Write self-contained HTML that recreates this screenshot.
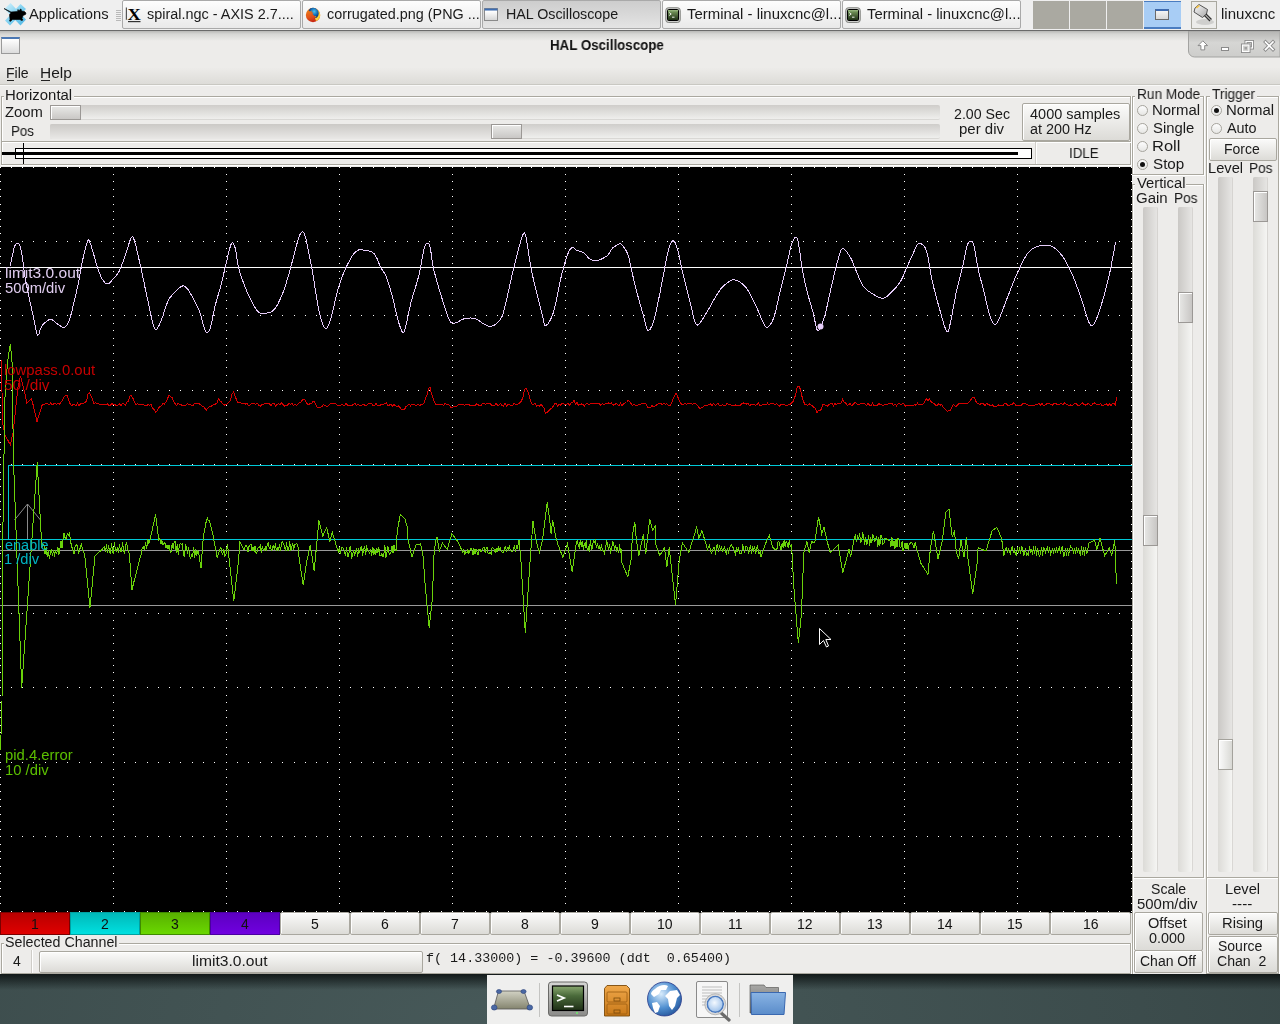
<!DOCTYPE html>
<html><head><meta charset="utf-8"><title>HAL Oscilloscope</title>
<style>
html,body{margin:0;padding:0;width:1280px;height:1024px;overflow:hidden;background:#3b4b4b;font-family:"Liberation Sans",sans-serif}
body>div{position:absolute}
.t{white-space:nowrap;transform-origin:0 0;will-change:transform}
</style></head><body>
<div style="left:0px;top:0px;width:1280px;height:30px;background:#efefef"></div>
<div style="left:0px;top:30px;width:1280px;height:1px;background:#6a6a6a"></div>
<div style="left:116px;top:10px;width:5px;height:1px;background:#b9b9b9"></div>
<div style="left:116px;top:12px;width:5px;height:1px;background:#b9b9b9"></div>
<div style="left:116px;top:14px;width:5px;height:1px;background:#b9b9b9"></div>
<div style="left:116px;top:16px;width:5px;height:1px;background:#b9b9b9"></div>
<div style="left:116px;top:18px;width:5px;height:1px;background:#b9b9b9"></div>
<div style="left:116px;top:20px;width:5px;height:1px;background:#b9b9b9"></div>
<div style="left:122px;top:0px;width:179px;height:29px;background:linear-gradient(#fdfdfd,#e9e9e9);border:1px solid #a9a9a9;box-sizing:border-box;border-radius:2px"></div>
<div style="left:302px;top:0px;width:179px;height:29px;background:linear-gradient(#fdfdfd,#e9e9e9);border:1px solid #a9a9a9;box-sizing:border-box;border-radius:2px"></div>
<div style="left:482px;top:0px;width:179px;height:29px;background:linear-gradient(#cdcdcd,#e4e4e4);border:1px solid #a9a9a9;box-sizing:border-box;border-radius:2px"></div>
<div style="left:662px;top:0px;width:179px;height:29px;background:linear-gradient(#fdfdfd,#e9e9e9);border:1px solid #a9a9a9;box-sizing:border-box;border-radius:2px"></div>
<div style="left:842px;top:0px;width:179px;height:29px;background:linear-gradient(#fdfdfd,#e9e9e9);border:1px solid #a9a9a9;box-sizing:border-box;border-radius:2px"></div>
<div style="left:1033px;top:1px;width:36px;height:28px;background:#aaa9a1"></div>
<div style="left:1070px;top:1px;width:36px;height:28px;background:#aaa9a1"></div>
<div style="left:1107px;top:1px;width:36px;height:28px;background:#aaa9a1"></div>
<div style="left:1144px;top:1px;width:37px;height:28px;background:#a8cdf5;border-top:1px solid #4a7cc0;border-bottom:2px solid #4a7cc0;box-sizing:border-box"></div>
<div style="left:1155px;top:9px;width:14px;height:11px;background:linear-gradient(#f4f4f4,#d8d8d8);border:1px solid #6a6a6a;border-top:2px solid #3d6ab0;box-sizing:border-box"></div>
<div style="left:0px;top:31px;width:1280px;height:943px;background:#edecea"></div>
<div style="left:0px;top:31px;width:1280px;height:10px;background:linear-gradient(#b8b8b6,#d6d6d4 30%,#edecea)"></div>
<div style="left:0px;top:60px;width:1280px;height:24px;background:linear-gradient(#edecea,#edecea 30%,#dddcd8)"></div>
<div style="left:1px;top:37px;width:19px;height:17px;background:linear-gradient(#fff,#dcdcdc);border:1px solid #9a9a9a;border-top:2px solid #4c78b4;box-sizing:border-box"></div>
<div style="left:7px;top:80px;width:7px;height:1px;background:#222"></div>
<div style="left:41px;top:80px;width:9px;height:1px;background:#222"></div>
<div style="left:0px;top:84px;width:1280px;height:1px;background:#c9c8c2"></div>
<div style="left:0px;top:85px;width:1280px;height:1px;background:#f8f8f7"></div>
<div style="left:1px;top:96px;width:1130px;height:69px;border:1px solid #aaa89f;box-sizing:border-box"></div>
<div style="left:2px;top:97px;width:1128px;height:67px;border:1px solid #ffffff;border-right:none;border-bottom:none;box-sizing:border-box"></div>
<div style="left:1131px;top:96px;width:1px;height:70px;background:#fff"></div>
<div style="left:1px;top:165px;width:1131px;height:1px;background:#fff"></div>
<div style="left:4px;top:90px;width:70px;height:12px;background:#edecea"></div>
<div style="left:50px;top:105px;width:890px;height:15px;background:linear-gradient(#cfcdca,#efefed);border-radius:2px;border-bottom:1px solid #d9d8d5;box-sizing:border-box"></div>
<div style="left:50px;top:105px;width:31px;height:15px;background:linear-gradient(#e9e9e7,#c9c7c5);border:1px solid #9b9895;box-shadow:inset 1px 1px 0 #fff;box-sizing:border-box"></div>
<div style="left:50px;top:124px;width:890px;height:15px;background:linear-gradient(#cfcdca,#efefed);border-radius:2px;border-bottom:1px solid #d9d8d5;box-sizing:border-box"></div>
<div style="left:50px;top:124px;width:441px;height:15px;background:linear-gradient(#cbc9c6,#e9e8e6);border-radius:2px 0 0 2px"></div>
<div style="left:491px;top:124px;width:31px;height:15px;background:linear-gradient(#e9e9e7,#c9c7c5);border:1px solid #9b9895;box-shadow:inset 1px 1px 0 #fff;box-sizing:border-box"></div>
<div style="left:1022px;top:103px;width:108px;height:38px;background:linear-gradient(#fbfbfa,#dcdbd7);border:1px solid #a9a79f;border-radius:2px;box-shadow:inset 1px 1px 0 #fff;box-sizing:border-box;"></div>
<div style="left:2px;top:141px;width:1129px;height:1px;background:#aaa89f"></div>
<div style="left:2px;top:142px;width:1129px;height:1px;background:#fff"></div>
<div style="left:1035px;top:142px;width:1px;height:22px;background:#cfcdc8"></div>
<div style="left:1036px;top:142px;width:1px;height:22px;background:#fff"></div>
<div style="left:15px;top:148px;width:1017px;height:11px;border:1px solid #000;box-sizing:border-box;background:#fff"></div>
<div style="left:2px;top:152px;width:1016px;height:3px;background:#000"></div>
<div style="left:23px;top:143px;width:1px;height:21px;background:#000"></div>
<svg width="1132" height="746" viewBox="0 167 1132 746" style="position:absolute;left:0;top:167px"><rect x="0" y="167" width="1132" height="746" fill="#000"/><path d="M0 167h1v1h-1zM11 167h1v1h-1zM22 167h1v1h-1zM33 167h1v1h-1zM45 167h1v1h-1zM56 167h1v1h-1zM67 167h1v1h-1zM79 167h1v1h-1zM90 167h1v1h-1zM101 167h1v1h-1zM113 167h1v1h-1zM124 167h1v1h-1zM135 167h1v1h-1zM147 167h1v1h-1zM158 167h1v1h-1zM169 167h1v1h-1zM180 167h1v1h-1zM192 167h1v1h-1zM203 167h1v1h-1zM214 167h1v1h-1zM226 167h1v1h-1zM237 167h1v1h-1zM248 167h1v1h-1zM260 167h1v1h-1zM271 167h1v1h-1zM282 167h1v1h-1zM294 167h1v1h-1zM305 167h1v1h-1zM316 167h1v1h-1zM327 167h1v1h-1zM339 167h1v1h-1zM350 167h1v1h-1zM361 167h1v1h-1zM373 167h1v1h-1zM384 167h1v1h-1zM395 167h1v1h-1zM407 167h1v1h-1zM418 167h1v1h-1zM429 167h1v1h-1zM441 167h1v1h-1zM452 167h1v1h-1zM463 167h1v1h-1zM475 167h1v1h-1zM486 167h1v1h-1zM497 167h1v1h-1zM508 167h1v1h-1zM520 167h1v1h-1zM531 167h1v1h-1zM542 167h1v1h-1zM554 167h1v1h-1zM565 167h1v1h-1zM576 167h1v1h-1zM588 167h1v1h-1zM599 167h1v1h-1zM610 167h1v1h-1zM622 167h1v1h-1zM633 167h1v1h-1zM644 167h1v1h-1zM655 167h1v1h-1zM667 167h1v1h-1zM678 167h1v1h-1zM689 167h1v1h-1zM701 167h1v1h-1zM712 167h1v1h-1zM723 167h1v1h-1zM735 167h1v1h-1zM746 167h1v1h-1zM757 167h1v1h-1zM769 167h1v1h-1zM780 167h1v1h-1zM791 167h1v1h-1zM803 167h1v1h-1zM814 167h1v1h-1zM825 167h1v1h-1zM836 167h1v1h-1zM848 167h1v1h-1zM859 167h1v1h-1zM870 167h1v1h-1zM882 167h1v1h-1zM893 167h1v1h-1zM904 167h1v1h-1zM916 167h1v1h-1zM927 167h1v1h-1zM938 167h1v1h-1zM950 167h1v1h-1zM961 167h1v1h-1zM972 167h1v1h-1zM983 167h1v1h-1zM995 167h1v1h-1zM1006 167h1v1h-1zM1017 167h1v1h-1zM1029 167h1v1h-1zM1040 167h1v1h-1zM1051 167h1v1h-1zM1063 167h1v1h-1zM1074 167h1v1h-1zM1085 167h1v1h-1zM1097 167h1v1h-1zM1108 167h1v1h-1zM1119 167h1v1h-1zM1131 167h1v1h-1zM0 241h1v1h-1zM11 241h1v1h-1zM22 241h1v1h-1zM33 241h1v1h-1zM45 241h1v1h-1zM56 241h1v1h-1zM67 241h1v1h-1zM79 241h1v1h-1zM90 241h1v1h-1zM101 241h1v1h-1zM113 241h1v1h-1zM124 241h1v1h-1zM135 241h1v1h-1zM147 241h1v1h-1zM158 241h1v1h-1zM169 241h1v1h-1zM180 241h1v1h-1zM192 241h1v1h-1zM203 241h1v1h-1zM214 241h1v1h-1zM226 241h1v1h-1zM237 241h1v1h-1zM248 241h1v1h-1zM260 241h1v1h-1zM271 241h1v1h-1zM282 241h1v1h-1zM294 241h1v1h-1zM305 241h1v1h-1zM316 241h1v1h-1zM327 241h1v1h-1zM339 241h1v1h-1zM350 241h1v1h-1zM361 241h1v1h-1zM373 241h1v1h-1zM384 241h1v1h-1zM395 241h1v1h-1zM407 241h1v1h-1zM418 241h1v1h-1zM429 241h1v1h-1zM441 241h1v1h-1zM452 241h1v1h-1zM463 241h1v1h-1zM475 241h1v1h-1zM486 241h1v1h-1zM497 241h1v1h-1zM508 241h1v1h-1zM520 241h1v1h-1zM531 241h1v1h-1zM542 241h1v1h-1zM554 241h1v1h-1zM565 241h1v1h-1zM576 241h1v1h-1zM588 241h1v1h-1zM599 241h1v1h-1zM610 241h1v1h-1zM622 241h1v1h-1zM633 241h1v1h-1zM644 241h1v1h-1zM655 241h1v1h-1zM667 241h1v1h-1zM678 241h1v1h-1zM689 241h1v1h-1zM701 241h1v1h-1zM712 241h1v1h-1zM723 241h1v1h-1zM735 241h1v1h-1zM746 241h1v1h-1zM757 241h1v1h-1zM769 241h1v1h-1zM780 241h1v1h-1zM791 241h1v1h-1zM803 241h1v1h-1zM814 241h1v1h-1zM825 241h1v1h-1zM836 241h1v1h-1zM848 241h1v1h-1zM859 241h1v1h-1zM870 241h1v1h-1zM882 241h1v1h-1zM893 241h1v1h-1zM904 241h1v1h-1zM916 241h1v1h-1zM927 241h1v1h-1zM938 241h1v1h-1zM950 241h1v1h-1zM961 241h1v1h-1zM972 241h1v1h-1zM983 241h1v1h-1zM995 241h1v1h-1zM1006 241h1v1h-1zM1017 241h1v1h-1zM1029 241h1v1h-1zM1040 241h1v1h-1zM1051 241h1v1h-1zM1063 241h1v1h-1zM1074 241h1v1h-1zM1085 241h1v1h-1zM1097 241h1v1h-1zM1108 241h1v1h-1zM1119 241h1v1h-1zM1131 241h1v1h-1zM0 315h1v1h-1zM11 315h1v1h-1zM22 315h1v1h-1zM33 315h1v1h-1zM45 315h1v1h-1zM56 315h1v1h-1zM67 315h1v1h-1zM79 315h1v1h-1zM90 315h1v1h-1zM101 315h1v1h-1zM113 315h1v1h-1zM124 315h1v1h-1zM135 315h1v1h-1zM147 315h1v1h-1zM158 315h1v1h-1zM169 315h1v1h-1zM180 315h1v1h-1zM192 315h1v1h-1zM203 315h1v1h-1zM214 315h1v1h-1zM226 315h1v1h-1zM237 315h1v1h-1zM248 315h1v1h-1zM260 315h1v1h-1zM271 315h1v1h-1zM282 315h1v1h-1zM294 315h1v1h-1zM305 315h1v1h-1zM316 315h1v1h-1zM327 315h1v1h-1zM339 315h1v1h-1zM350 315h1v1h-1zM361 315h1v1h-1zM373 315h1v1h-1zM384 315h1v1h-1zM395 315h1v1h-1zM407 315h1v1h-1zM418 315h1v1h-1zM429 315h1v1h-1zM441 315h1v1h-1zM452 315h1v1h-1zM463 315h1v1h-1zM475 315h1v1h-1zM486 315h1v1h-1zM497 315h1v1h-1zM508 315h1v1h-1zM520 315h1v1h-1zM531 315h1v1h-1zM542 315h1v1h-1zM554 315h1v1h-1zM565 315h1v1h-1zM576 315h1v1h-1zM588 315h1v1h-1zM599 315h1v1h-1zM610 315h1v1h-1zM622 315h1v1h-1zM633 315h1v1h-1zM644 315h1v1h-1zM655 315h1v1h-1zM667 315h1v1h-1zM678 315h1v1h-1zM689 315h1v1h-1zM701 315h1v1h-1zM712 315h1v1h-1zM723 315h1v1h-1zM735 315h1v1h-1zM746 315h1v1h-1zM757 315h1v1h-1zM769 315h1v1h-1zM780 315h1v1h-1zM791 315h1v1h-1zM803 315h1v1h-1zM814 315h1v1h-1zM825 315h1v1h-1zM836 315h1v1h-1zM848 315h1v1h-1zM859 315h1v1h-1zM870 315h1v1h-1zM882 315h1v1h-1zM893 315h1v1h-1zM904 315h1v1h-1zM916 315h1v1h-1zM927 315h1v1h-1zM938 315h1v1h-1zM950 315h1v1h-1zM961 315h1v1h-1zM972 315h1v1h-1zM983 315h1v1h-1zM995 315h1v1h-1zM1006 315h1v1h-1zM1017 315h1v1h-1zM1029 315h1v1h-1zM1040 315h1v1h-1zM1051 315h1v1h-1zM1063 315h1v1h-1zM1074 315h1v1h-1zM1085 315h1v1h-1zM1097 315h1v1h-1zM1108 315h1v1h-1zM1119 315h1v1h-1zM1131 315h1v1h-1zM0 390h1v1h-1zM11 390h1v1h-1zM22 390h1v1h-1zM33 390h1v1h-1zM45 390h1v1h-1zM56 390h1v1h-1zM67 390h1v1h-1zM79 390h1v1h-1zM90 390h1v1h-1zM101 390h1v1h-1zM113 390h1v1h-1zM124 390h1v1h-1zM135 390h1v1h-1zM147 390h1v1h-1zM158 390h1v1h-1zM169 390h1v1h-1zM180 390h1v1h-1zM192 390h1v1h-1zM203 390h1v1h-1zM214 390h1v1h-1zM226 390h1v1h-1zM237 390h1v1h-1zM248 390h1v1h-1zM260 390h1v1h-1zM271 390h1v1h-1zM282 390h1v1h-1zM294 390h1v1h-1zM305 390h1v1h-1zM316 390h1v1h-1zM327 390h1v1h-1zM339 390h1v1h-1zM350 390h1v1h-1zM361 390h1v1h-1zM373 390h1v1h-1zM384 390h1v1h-1zM395 390h1v1h-1zM407 390h1v1h-1zM418 390h1v1h-1zM429 390h1v1h-1zM441 390h1v1h-1zM452 390h1v1h-1zM463 390h1v1h-1zM475 390h1v1h-1zM486 390h1v1h-1zM497 390h1v1h-1zM508 390h1v1h-1zM520 390h1v1h-1zM531 390h1v1h-1zM542 390h1v1h-1zM554 390h1v1h-1zM565 390h1v1h-1zM576 390h1v1h-1zM588 390h1v1h-1zM599 390h1v1h-1zM610 390h1v1h-1zM622 390h1v1h-1zM633 390h1v1h-1zM644 390h1v1h-1zM655 390h1v1h-1zM667 390h1v1h-1zM678 390h1v1h-1zM689 390h1v1h-1zM701 390h1v1h-1zM712 390h1v1h-1zM723 390h1v1h-1zM735 390h1v1h-1zM746 390h1v1h-1zM757 390h1v1h-1zM769 390h1v1h-1zM780 390h1v1h-1zM791 390h1v1h-1zM803 390h1v1h-1zM814 390h1v1h-1zM825 390h1v1h-1zM836 390h1v1h-1zM848 390h1v1h-1zM859 390h1v1h-1zM870 390h1v1h-1zM882 390h1v1h-1zM893 390h1v1h-1zM904 390h1v1h-1zM916 390h1v1h-1zM927 390h1v1h-1zM938 390h1v1h-1zM950 390h1v1h-1zM961 390h1v1h-1zM972 390h1v1h-1zM983 390h1v1h-1zM995 390h1v1h-1zM1006 390h1v1h-1zM1017 390h1v1h-1zM1029 390h1v1h-1zM1040 390h1v1h-1zM1051 390h1v1h-1zM1063 390h1v1h-1zM1074 390h1v1h-1zM1085 390h1v1h-1zM1097 390h1v1h-1zM1108 390h1v1h-1zM1119 390h1v1h-1zM1131 390h1v1h-1zM0 464h1v1h-1zM11 464h1v1h-1zM22 464h1v1h-1zM33 464h1v1h-1zM45 464h1v1h-1zM56 464h1v1h-1zM67 464h1v1h-1zM79 464h1v1h-1zM90 464h1v1h-1zM101 464h1v1h-1zM113 464h1v1h-1zM124 464h1v1h-1zM135 464h1v1h-1zM147 464h1v1h-1zM158 464h1v1h-1zM169 464h1v1h-1zM180 464h1v1h-1zM192 464h1v1h-1zM203 464h1v1h-1zM214 464h1v1h-1zM226 464h1v1h-1zM237 464h1v1h-1zM248 464h1v1h-1zM260 464h1v1h-1zM271 464h1v1h-1zM282 464h1v1h-1zM294 464h1v1h-1zM305 464h1v1h-1zM316 464h1v1h-1zM327 464h1v1h-1zM339 464h1v1h-1zM350 464h1v1h-1zM361 464h1v1h-1zM373 464h1v1h-1zM384 464h1v1h-1zM395 464h1v1h-1zM407 464h1v1h-1zM418 464h1v1h-1zM429 464h1v1h-1zM441 464h1v1h-1zM452 464h1v1h-1zM463 464h1v1h-1zM475 464h1v1h-1zM486 464h1v1h-1zM497 464h1v1h-1zM508 464h1v1h-1zM520 464h1v1h-1zM531 464h1v1h-1zM542 464h1v1h-1zM554 464h1v1h-1zM565 464h1v1h-1zM576 464h1v1h-1zM588 464h1v1h-1zM599 464h1v1h-1zM610 464h1v1h-1zM622 464h1v1h-1zM633 464h1v1h-1zM644 464h1v1h-1zM655 464h1v1h-1zM667 464h1v1h-1zM678 464h1v1h-1zM689 464h1v1h-1zM701 464h1v1h-1zM712 464h1v1h-1zM723 464h1v1h-1zM735 464h1v1h-1zM746 464h1v1h-1zM757 464h1v1h-1zM769 464h1v1h-1zM780 464h1v1h-1zM791 464h1v1h-1zM803 464h1v1h-1zM814 464h1v1h-1zM825 464h1v1h-1zM836 464h1v1h-1zM848 464h1v1h-1zM859 464h1v1h-1zM870 464h1v1h-1zM882 464h1v1h-1zM893 464h1v1h-1zM904 464h1v1h-1zM916 464h1v1h-1zM927 464h1v1h-1zM938 464h1v1h-1zM950 464h1v1h-1zM961 464h1v1h-1zM972 464h1v1h-1zM983 464h1v1h-1zM995 464h1v1h-1zM1006 464h1v1h-1zM1017 464h1v1h-1zM1029 464h1v1h-1zM1040 464h1v1h-1zM1051 464h1v1h-1zM1063 464h1v1h-1zM1074 464h1v1h-1zM1085 464h1v1h-1zM1097 464h1v1h-1zM1108 464h1v1h-1zM1119 464h1v1h-1zM1131 464h1v1h-1zM0 539h1v1h-1zM11 539h1v1h-1zM22 539h1v1h-1zM33 539h1v1h-1zM45 539h1v1h-1zM56 539h1v1h-1zM67 539h1v1h-1zM79 539h1v1h-1zM90 539h1v1h-1zM101 539h1v1h-1zM113 539h1v1h-1zM124 539h1v1h-1zM135 539h1v1h-1zM147 539h1v1h-1zM158 539h1v1h-1zM169 539h1v1h-1zM180 539h1v1h-1zM192 539h1v1h-1zM203 539h1v1h-1zM214 539h1v1h-1zM226 539h1v1h-1zM237 539h1v1h-1zM248 539h1v1h-1zM260 539h1v1h-1zM271 539h1v1h-1zM282 539h1v1h-1zM294 539h1v1h-1zM305 539h1v1h-1zM316 539h1v1h-1zM327 539h1v1h-1zM339 539h1v1h-1zM350 539h1v1h-1zM361 539h1v1h-1zM373 539h1v1h-1zM384 539h1v1h-1zM395 539h1v1h-1zM407 539h1v1h-1zM418 539h1v1h-1zM429 539h1v1h-1zM441 539h1v1h-1zM452 539h1v1h-1zM463 539h1v1h-1zM475 539h1v1h-1zM486 539h1v1h-1zM497 539h1v1h-1zM508 539h1v1h-1zM520 539h1v1h-1zM531 539h1v1h-1zM542 539h1v1h-1zM554 539h1v1h-1zM565 539h1v1h-1zM576 539h1v1h-1zM588 539h1v1h-1zM599 539h1v1h-1zM610 539h1v1h-1zM622 539h1v1h-1zM633 539h1v1h-1zM644 539h1v1h-1zM655 539h1v1h-1zM667 539h1v1h-1zM678 539h1v1h-1zM689 539h1v1h-1zM701 539h1v1h-1zM712 539h1v1h-1zM723 539h1v1h-1zM735 539h1v1h-1zM746 539h1v1h-1zM757 539h1v1h-1zM769 539h1v1h-1zM780 539h1v1h-1zM791 539h1v1h-1zM803 539h1v1h-1zM814 539h1v1h-1zM825 539h1v1h-1zM836 539h1v1h-1zM848 539h1v1h-1zM859 539h1v1h-1zM870 539h1v1h-1zM882 539h1v1h-1zM893 539h1v1h-1zM904 539h1v1h-1zM916 539h1v1h-1zM927 539h1v1h-1zM938 539h1v1h-1zM950 539h1v1h-1zM961 539h1v1h-1zM972 539h1v1h-1zM983 539h1v1h-1zM995 539h1v1h-1zM1006 539h1v1h-1zM1017 539h1v1h-1zM1029 539h1v1h-1zM1040 539h1v1h-1zM1051 539h1v1h-1zM1063 539h1v1h-1zM1074 539h1v1h-1zM1085 539h1v1h-1zM1097 539h1v1h-1zM1108 539h1v1h-1zM1119 539h1v1h-1zM1131 539h1v1h-1zM0 613h1v1h-1zM11 613h1v1h-1zM22 613h1v1h-1zM33 613h1v1h-1zM45 613h1v1h-1zM56 613h1v1h-1zM67 613h1v1h-1zM79 613h1v1h-1zM90 613h1v1h-1zM101 613h1v1h-1zM113 613h1v1h-1zM124 613h1v1h-1zM135 613h1v1h-1zM147 613h1v1h-1zM158 613h1v1h-1zM169 613h1v1h-1zM180 613h1v1h-1zM192 613h1v1h-1zM203 613h1v1h-1zM214 613h1v1h-1zM226 613h1v1h-1zM237 613h1v1h-1zM248 613h1v1h-1zM260 613h1v1h-1zM271 613h1v1h-1zM282 613h1v1h-1zM294 613h1v1h-1zM305 613h1v1h-1zM316 613h1v1h-1zM327 613h1v1h-1zM339 613h1v1h-1zM350 613h1v1h-1zM361 613h1v1h-1zM373 613h1v1h-1zM384 613h1v1h-1zM395 613h1v1h-1zM407 613h1v1h-1zM418 613h1v1h-1zM429 613h1v1h-1zM441 613h1v1h-1zM452 613h1v1h-1zM463 613h1v1h-1zM475 613h1v1h-1zM486 613h1v1h-1zM497 613h1v1h-1zM508 613h1v1h-1zM520 613h1v1h-1zM531 613h1v1h-1zM542 613h1v1h-1zM554 613h1v1h-1zM565 613h1v1h-1zM576 613h1v1h-1zM588 613h1v1h-1zM599 613h1v1h-1zM610 613h1v1h-1zM622 613h1v1h-1zM633 613h1v1h-1zM644 613h1v1h-1zM655 613h1v1h-1zM667 613h1v1h-1zM678 613h1v1h-1zM689 613h1v1h-1zM701 613h1v1h-1zM712 613h1v1h-1zM723 613h1v1h-1zM735 613h1v1h-1zM746 613h1v1h-1zM757 613h1v1h-1zM769 613h1v1h-1zM780 613h1v1h-1zM791 613h1v1h-1zM803 613h1v1h-1zM814 613h1v1h-1zM825 613h1v1h-1zM836 613h1v1h-1zM848 613h1v1h-1zM859 613h1v1h-1zM870 613h1v1h-1zM882 613h1v1h-1zM893 613h1v1h-1zM904 613h1v1h-1zM916 613h1v1h-1zM927 613h1v1h-1zM938 613h1v1h-1zM950 613h1v1h-1zM961 613h1v1h-1zM972 613h1v1h-1zM983 613h1v1h-1zM995 613h1v1h-1zM1006 613h1v1h-1zM1017 613h1v1h-1zM1029 613h1v1h-1zM1040 613h1v1h-1zM1051 613h1v1h-1zM1063 613h1v1h-1zM1074 613h1v1h-1zM1085 613h1v1h-1zM1097 613h1v1h-1zM1108 613h1v1h-1zM1119 613h1v1h-1zM1131 613h1v1h-1zM0 687h1v1h-1zM11 687h1v1h-1zM22 687h1v1h-1zM33 687h1v1h-1zM45 687h1v1h-1zM56 687h1v1h-1zM67 687h1v1h-1zM79 687h1v1h-1zM90 687h1v1h-1zM101 687h1v1h-1zM113 687h1v1h-1zM124 687h1v1h-1zM135 687h1v1h-1zM147 687h1v1h-1zM158 687h1v1h-1zM169 687h1v1h-1zM180 687h1v1h-1zM192 687h1v1h-1zM203 687h1v1h-1zM214 687h1v1h-1zM226 687h1v1h-1zM237 687h1v1h-1zM248 687h1v1h-1zM260 687h1v1h-1zM271 687h1v1h-1zM282 687h1v1h-1zM294 687h1v1h-1zM305 687h1v1h-1zM316 687h1v1h-1zM327 687h1v1h-1zM339 687h1v1h-1zM350 687h1v1h-1zM361 687h1v1h-1zM373 687h1v1h-1zM384 687h1v1h-1zM395 687h1v1h-1zM407 687h1v1h-1zM418 687h1v1h-1zM429 687h1v1h-1zM441 687h1v1h-1zM452 687h1v1h-1zM463 687h1v1h-1zM475 687h1v1h-1zM486 687h1v1h-1zM497 687h1v1h-1zM508 687h1v1h-1zM520 687h1v1h-1zM531 687h1v1h-1zM542 687h1v1h-1zM554 687h1v1h-1zM565 687h1v1h-1zM576 687h1v1h-1zM588 687h1v1h-1zM599 687h1v1h-1zM610 687h1v1h-1zM622 687h1v1h-1zM633 687h1v1h-1zM644 687h1v1h-1zM655 687h1v1h-1zM667 687h1v1h-1zM678 687h1v1h-1zM689 687h1v1h-1zM701 687h1v1h-1zM712 687h1v1h-1zM723 687h1v1h-1zM735 687h1v1h-1zM746 687h1v1h-1zM757 687h1v1h-1zM769 687h1v1h-1zM780 687h1v1h-1zM791 687h1v1h-1zM803 687h1v1h-1zM814 687h1v1h-1zM825 687h1v1h-1zM836 687h1v1h-1zM848 687h1v1h-1zM859 687h1v1h-1zM870 687h1v1h-1zM882 687h1v1h-1zM893 687h1v1h-1zM904 687h1v1h-1zM916 687h1v1h-1zM927 687h1v1h-1zM938 687h1v1h-1zM950 687h1v1h-1zM961 687h1v1h-1zM972 687h1v1h-1zM983 687h1v1h-1zM995 687h1v1h-1zM1006 687h1v1h-1zM1017 687h1v1h-1zM1029 687h1v1h-1zM1040 687h1v1h-1zM1051 687h1v1h-1zM1063 687h1v1h-1zM1074 687h1v1h-1zM1085 687h1v1h-1zM1097 687h1v1h-1zM1108 687h1v1h-1zM1119 687h1v1h-1zM1131 687h1v1h-1zM0 762h1v1h-1zM11 762h1v1h-1zM22 762h1v1h-1zM33 762h1v1h-1zM45 762h1v1h-1zM56 762h1v1h-1zM67 762h1v1h-1zM79 762h1v1h-1zM90 762h1v1h-1zM101 762h1v1h-1zM113 762h1v1h-1zM124 762h1v1h-1zM135 762h1v1h-1zM147 762h1v1h-1zM158 762h1v1h-1zM169 762h1v1h-1zM180 762h1v1h-1zM192 762h1v1h-1zM203 762h1v1h-1zM214 762h1v1h-1zM226 762h1v1h-1zM237 762h1v1h-1zM248 762h1v1h-1zM260 762h1v1h-1zM271 762h1v1h-1zM282 762h1v1h-1zM294 762h1v1h-1zM305 762h1v1h-1zM316 762h1v1h-1zM327 762h1v1h-1zM339 762h1v1h-1zM350 762h1v1h-1zM361 762h1v1h-1zM373 762h1v1h-1zM384 762h1v1h-1zM395 762h1v1h-1zM407 762h1v1h-1zM418 762h1v1h-1zM429 762h1v1h-1zM441 762h1v1h-1zM452 762h1v1h-1zM463 762h1v1h-1zM475 762h1v1h-1zM486 762h1v1h-1zM497 762h1v1h-1zM508 762h1v1h-1zM520 762h1v1h-1zM531 762h1v1h-1zM542 762h1v1h-1zM554 762h1v1h-1zM565 762h1v1h-1zM576 762h1v1h-1zM588 762h1v1h-1zM599 762h1v1h-1zM610 762h1v1h-1zM622 762h1v1h-1zM633 762h1v1h-1zM644 762h1v1h-1zM655 762h1v1h-1zM667 762h1v1h-1zM678 762h1v1h-1zM689 762h1v1h-1zM701 762h1v1h-1zM712 762h1v1h-1zM723 762h1v1h-1zM735 762h1v1h-1zM746 762h1v1h-1zM757 762h1v1h-1zM769 762h1v1h-1zM780 762h1v1h-1zM791 762h1v1h-1zM803 762h1v1h-1zM814 762h1v1h-1zM825 762h1v1h-1zM836 762h1v1h-1zM848 762h1v1h-1zM859 762h1v1h-1zM870 762h1v1h-1zM882 762h1v1h-1zM893 762h1v1h-1zM904 762h1v1h-1zM916 762h1v1h-1zM927 762h1v1h-1zM938 762h1v1h-1zM950 762h1v1h-1zM961 762h1v1h-1zM972 762h1v1h-1zM983 762h1v1h-1zM995 762h1v1h-1zM1006 762h1v1h-1zM1017 762h1v1h-1zM1029 762h1v1h-1zM1040 762h1v1h-1zM1051 762h1v1h-1zM1063 762h1v1h-1zM1074 762h1v1h-1zM1085 762h1v1h-1zM1097 762h1v1h-1zM1108 762h1v1h-1zM1119 762h1v1h-1zM1131 762h1v1h-1zM0 836h1v1h-1zM11 836h1v1h-1zM22 836h1v1h-1zM33 836h1v1h-1zM45 836h1v1h-1zM56 836h1v1h-1zM67 836h1v1h-1zM79 836h1v1h-1zM90 836h1v1h-1zM101 836h1v1h-1zM113 836h1v1h-1zM124 836h1v1h-1zM135 836h1v1h-1zM147 836h1v1h-1zM158 836h1v1h-1zM169 836h1v1h-1zM180 836h1v1h-1zM192 836h1v1h-1zM203 836h1v1h-1zM214 836h1v1h-1zM226 836h1v1h-1zM237 836h1v1h-1zM248 836h1v1h-1zM260 836h1v1h-1zM271 836h1v1h-1zM282 836h1v1h-1zM294 836h1v1h-1zM305 836h1v1h-1zM316 836h1v1h-1zM327 836h1v1h-1zM339 836h1v1h-1zM350 836h1v1h-1zM361 836h1v1h-1zM373 836h1v1h-1zM384 836h1v1h-1zM395 836h1v1h-1zM407 836h1v1h-1zM418 836h1v1h-1zM429 836h1v1h-1zM441 836h1v1h-1zM452 836h1v1h-1zM463 836h1v1h-1zM475 836h1v1h-1zM486 836h1v1h-1zM497 836h1v1h-1zM508 836h1v1h-1zM520 836h1v1h-1zM531 836h1v1h-1zM542 836h1v1h-1zM554 836h1v1h-1zM565 836h1v1h-1zM576 836h1v1h-1zM588 836h1v1h-1zM599 836h1v1h-1zM610 836h1v1h-1zM622 836h1v1h-1zM633 836h1v1h-1zM644 836h1v1h-1zM655 836h1v1h-1zM667 836h1v1h-1zM678 836h1v1h-1zM689 836h1v1h-1zM701 836h1v1h-1zM712 836h1v1h-1zM723 836h1v1h-1zM735 836h1v1h-1zM746 836h1v1h-1zM757 836h1v1h-1zM769 836h1v1h-1zM780 836h1v1h-1zM791 836h1v1h-1zM803 836h1v1h-1zM814 836h1v1h-1zM825 836h1v1h-1zM836 836h1v1h-1zM848 836h1v1h-1zM859 836h1v1h-1zM870 836h1v1h-1zM882 836h1v1h-1zM893 836h1v1h-1zM904 836h1v1h-1zM916 836h1v1h-1zM927 836h1v1h-1zM938 836h1v1h-1zM950 836h1v1h-1zM961 836h1v1h-1zM972 836h1v1h-1zM983 836h1v1h-1zM995 836h1v1h-1zM1006 836h1v1h-1zM1017 836h1v1h-1zM1029 836h1v1h-1zM1040 836h1v1h-1zM1051 836h1v1h-1zM1063 836h1v1h-1zM1074 836h1v1h-1zM1085 836h1v1h-1zM1097 836h1v1h-1zM1108 836h1v1h-1zM1119 836h1v1h-1zM1131 836h1v1h-1zM0 911h1v1h-1zM11 911h1v1h-1zM22 911h1v1h-1zM33 911h1v1h-1zM45 911h1v1h-1zM56 911h1v1h-1zM67 911h1v1h-1zM79 911h1v1h-1zM90 911h1v1h-1zM101 911h1v1h-1zM113 911h1v1h-1zM124 911h1v1h-1zM135 911h1v1h-1zM147 911h1v1h-1zM158 911h1v1h-1zM169 911h1v1h-1zM180 911h1v1h-1zM192 911h1v1h-1zM203 911h1v1h-1zM214 911h1v1h-1zM226 911h1v1h-1zM237 911h1v1h-1zM248 911h1v1h-1zM260 911h1v1h-1zM271 911h1v1h-1zM282 911h1v1h-1zM294 911h1v1h-1zM305 911h1v1h-1zM316 911h1v1h-1zM327 911h1v1h-1zM339 911h1v1h-1zM350 911h1v1h-1zM361 911h1v1h-1zM373 911h1v1h-1zM384 911h1v1h-1zM395 911h1v1h-1zM407 911h1v1h-1zM418 911h1v1h-1zM429 911h1v1h-1zM441 911h1v1h-1zM452 911h1v1h-1zM463 911h1v1h-1zM475 911h1v1h-1zM486 911h1v1h-1zM497 911h1v1h-1zM508 911h1v1h-1zM520 911h1v1h-1zM531 911h1v1h-1zM542 911h1v1h-1zM554 911h1v1h-1zM565 911h1v1h-1zM576 911h1v1h-1zM588 911h1v1h-1zM599 911h1v1h-1zM610 911h1v1h-1zM622 911h1v1h-1zM633 911h1v1h-1zM644 911h1v1h-1zM655 911h1v1h-1zM667 911h1v1h-1zM678 911h1v1h-1zM689 911h1v1h-1zM701 911h1v1h-1zM712 911h1v1h-1zM723 911h1v1h-1zM735 911h1v1h-1zM746 911h1v1h-1zM757 911h1v1h-1zM769 911h1v1h-1zM780 911h1v1h-1zM791 911h1v1h-1zM803 911h1v1h-1zM814 911h1v1h-1zM825 911h1v1h-1zM836 911h1v1h-1zM848 911h1v1h-1zM859 911h1v1h-1zM870 911h1v1h-1zM882 911h1v1h-1zM893 911h1v1h-1zM904 911h1v1h-1zM916 911h1v1h-1zM927 911h1v1h-1zM938 911h1v1h-1zM950 911h1v1h-1zM961 911h1v1h-1zM972 911h1v1h-1zM983 911h1v1h-1zM995 911h1v1h-1zM1006 911h1v1h-1zM1017 911h1v1h-1zM1029 911h1v1h-1zM1040 911h1v1h-1zM1051 911h1v1h-1zM1063 911h1v1h-1zM1074 911h1v1h-1zM1085 911h1v1h-1zM1097 911h1v1h-1zM1108 911h1v1h-1zM1119 911h1v1h-1zM1131 911h1v1h-1zM0 174h1v1h-1zM0 181h1v1h-1zM0 189h1v1h-1zM0 196h1v1h-1zM0 204h1v1h-1zM0 211h1v1h-1zM0 219h1v1h-1zM0 226h1v1h-1zM0 233h1v1h-1zM0 248h1v1h-1zM0 256h1v1h-1zM0 263h1v1h-1zM0 271h1v1h-1zM0 278h1v1h-1zM0 286h1v1h-1zM0 293h1v1h-1zM0 300h1v1h-1zM0 308h1v1h-1zM0 323h1v1h-1zM0 330h1v1h-1zM0 338h1v1h-1zM0 345h1v1h-1zM0 353h1v1h-1zM0 360h1v1h-1zM0 367h1v1h-1zM0 375h1v1h-1zM0 382h1v1h-1zM0 397h1v1h-1zM0 405h1v1h-1zM0 412h1v1h-1zM0 419h1v1h-1zM0 427h1v1h-1zM0 434h1v1h-1zM0 442h1v1h-1zM0 449h1v1h-1zM0 457h1v1h-1zM0 472h1v1h-1zM0 479h1v1h-1zM0 486h1v1h-1zM0 494h1v1h-1zM0 501h1v1h-1zM0 509h1v1h-1zM0 516h1v1h-1zM0 524h1v1h-1zM0 531h1v1h-1zM0 546h1v1h-1zM0 553h1v1h-1zM0 561h1v1h-1zM0 568h1v1h-1zM0 576h1v1h-1zM0 583h1v1h-1zM0 591h1v1h-1zM0 598h1v1h-1zM0 605h1v1h-1zM0 620h1v1h-1zM0 628h1v1h-1zM0 635h1v1h-1zM0 643h1v1h-1zM0 650h1v1h-1zM0 658h1v1h-1zM0 665h1v1h-1zM0 672h1v1h-1zM0 680h1v1h-1zM0 695h1v1h-1zM0 702h1v1h-1zM0 710h1v1h-1zM0 717h1v1h-1zM0 725h1v1h-1zM0 732h1v1h-1zM0 739h1v1h-1zM0 747h1v1h-1zM0 754h1v1h-1zM0 769h1v1h-1zM0 777h1v1h-1zM0 784h1v1h-1zM0 791h1v1h-1zM0 799h1v1h-1zM0 806h1v1h-1zM0 814h1v1h-1zM0 821h1v1h-1zM0 829h1v1h-1zM0 844h1v1h-1zM0 851h1v1h-1zM0 858h1v1h-1zM0 866h1v1h-1zM0 873h1v1h-1zM0 881h1v1h-1zM0 888h1v1h-1zM0 896h1v1h-1zM0 903h1v1h-1zM113 174h1v1h-1zM113 181h1v1h-1zM113 189h1v1h-1zM113 196h1v1h-1zM113 204h1v1h-1zM113 211h1v1h-1zM113 219h1v1h-1zM113 226h1v1h-1zM113 233h1v1h-1zM113 248h1v1h-1zM113 256h1v1h-1zM113 263h1v1h-1zM113 271h1v1h-1zM113 278h1v1h-1zM113 286h1v1h-1zM113 293h1v1h-1zM113 300h1v1h-1zM113 308h1v1h-1zM113 323h1v1h-1zM113 330h1v1h-1zM113 338h1v1h-1zM113 345h1v1h-1zM113 353h1v1h-1zM113 360h1v1h-1zM113 367h1v1h-1zM113 375h1v1h-1zM113 382h1v1h-1zM113 397h1v1h-1zM113 405h1v1h-1zM113 412h1v1h-1zM113 419h1v1h-1zM113 427h1v1h-1zM113 434h1v1h-1zM113 442h1v1h-1zM113 449h1v1h-1zM113 457h1v1h-1zM113 472h1v1h-1zM113 479h1v1h-1zM113 486h1v1h-1zM113 494h1v1h-1zM113 501h1v1h-1zM113 509h1v1h-1zM113 516h1v1h-1zM113 524h1v1h-1zM113 531h1v1h-1zM113 546h1v1h-1zM113 553h1v1h-1zM113 561h1v1h-1zM113 568h1v1h-1zM113 576h1v1h-1zM113 583h1v1h-1zM113 591h1v1h-1zM113 598h1v1h-1zM113 605h1v1h-1zM113 620h1v1h-1zM113 628h1v1h-1zM113 635h1v1h-1zM113 643h1v1h-1zM113 650h1v1h-1zM113 658h1v1h-1zM113 665h1v1h-1zM113 672h1v1h-1zM113 680h1v1h-1zM113 695h1v1h-1zM113 702h1v1h-1zM113 710h1v1h-1zM113 717h1v1h-1zM113 725h1v1h-1zM113 732h1v1h-1zM113 739h1v1h-1zM113 747h1v1h-1zM113 754h1v1h-1zM113 769h1v1h-1zM113 777h1v1h-1zM113 784h1v1h-1zM113 791h1v1h-1zM113 799h1v1h-1zM113 806h1v1h-1zM113 814h1v1h-1zM113 821h1v1h-1zM113 829h1v1h-1zM113 844h1v1h-1zM113 851h1v1h-1zM113 858h1v1h-1zM113 866h1v1h-1zM113 873h1v1h-1zM113 881h1v1h-1zM113 888h1v1h-1zM113 896h1v1h-1zM113 903h1v1h-1zM226 174h1v1h-1zM226 181h1v1h-1zM226 189h1v1h-1zM226 196h1v1h-1zM226 204h1v1h-1zM226 211h1v1h-1zM226 219h1v1h-1zM226 226h1v1h-1zM226 233h1v1h-1zM226 248h1v1h-1zM226 256h1v1h-1zM226 263h1v1h-1zM226 271h1v1h-1zM226 278h1v1h-1zM226 286h1v1h-1zM226 293h1v1h-1zM226 300h1v1h-1zM226 308h1v1h-1zM226 323h1v1h-1zM226 330h1v1h-1zM226 338h1v1h-1zM226 345h1v1h-1zM226 353h1v1h-1zM226 360h1v1h-1zM226 367h1v1h-1zM226 375h1v1h-1zM226 382h1v1h-1zM226 397h1v1h-1zM226 405h1v1h-1zM226 412h1v1h-1zM226 419h1v1h-1zM226 427h1v1h-1zM226 434h1v1h-1zM226 442h1v1h-1zM226 449h1v1h-1zM226 457h1v1h-1zM226 472h1v1h-1zM226 479h1v1h-1zM226 486h1v1h-1zM226 494h1v1h-1zM226 501h1v1h-1zM226 509h1v1h-1zM226 516h1v1h-1zM226 524h1v1h-1zM226 531h1v1h-1zM226 546h1v1h-1zM226 553h1v1h-1zM226 561h1v1h-1zM226 568h1v1h-1zM226 576h1v1h-1zM226 583h1v1h-1zM226 591h1v1h-1zM226 598h1v1h-1zM226 605h1v1h-1zM226 620h1v1h-1zM226 628h1v1h-1zM226 635h1v1h-1zM226 643h1v1h-1zM226 650h1v1h-1zM226 658h1v1h-1zM226 665h1v1h-1zM226 672h1v1h-1zM226 680h1v1h-1zM226 695h1v1h-1zM226 702h1v1h-1zM226 710h1v1h-1zM226 717h1v1h-1zM226 725h1v1h-1zM226 732h1v1h-1zM226 739h1v1h-1zM226 747h1v1h-1zM226 754h1v1h-1zM226 769h1v1h-1zM226 777h1v1h-1zM226 784h1v1h-1zM226 791h1v1h-1zM226 799h1v1h-1zM226 806h1v1h-1zM226 814h1v1h-1zM226 821h1v1h-1zM226 829h1v1h-1zM226 844h1v1h-1zM226 851h1v1h-1zM226 858h1v1h-1zM226 866h1v1h-1zM226 873h1v1h-1zM226 881h1v1h-1zM226 888h1v1h-1zM226 896h1v1h-1zM226 903h1v1h-1zM339 174h1v1h-1zM339 181h1v1h-1zM339 189h1v1h-1zM339 196h1v1h-1zM339 204h1v1h-1zM339 211h1v1h-1zM339 219h1v1h-1zM339 226h1v1h-1zM339 233h1v1h-1zM339 248h1v1h-1zM339 256h1v1h-1zM339 263h1v1h-1zM339 271h1v1h-1zM339 278h1v1h-1zM339 286h1v1h-1zM339 293h1v1h-1zM339 300h1v1h-1zM339 308h1v1h-1zM339 323h1v1h-1zM339 330h1v1h-1zM339 338h1v1h-1zM339 345h1v1h-1zM339 353h1v1h-1zM339 360h1v1h-1zM339 367h1v1h-1zM339 375h1v1h-1zM339 382h1v1h-1zM339 397h1v1h-1zM339 405h1v1h-1zM339 412h1v1h-1zM339 419h1v1h-1zM339 427h1v1h-1zM339 434h1v1h-1zM339 442h1v1h-1zM339 449h1v1h-1zM339 457h1v1h-1zM339 472h1v1h-1zM339 479h1v1h-1zM339 486h1v1h-1zM339 494h1v1h-1zM339 501h1v1h-1zM339 509h1v1h-1zM339 516h1v1h-1zM339 524h1v1h-1zM339 531h1v1h-1zM339 546h1v1h-1zM339 553h1v1h-1zM339 561h1v1h-1zM339 568h1v1h-1zM339 576h1v1h-1zM339 583h1v1h-1zM339 591h1v1h-1zM339 598h1v1h-1zM339 605h1v1h-1zM339 620h1v1h-1zM339 628h1v1h-1zM339 635h1v1h-1zM339 643h1v1h-1zM339 650h1v1h-1zM339 658h1v1h-1zM339 665h1v1h-1zM339 672h1v1h-1zM339 680h1v1h-1zM339 695h1v1h-1zM339 702h1v1h-1zM339 710h1v1h-1zM339 717h1v1h-1zM339 725h1v1h-1zM339 732h1v1h-1zM339 739h1v1h-1zM339 747h1v1h-1zM339 754h1v1h-1zM339 769h1v1h-1zM339 777h1v1h-1zM339 784h1v1h-1zM339 791h1v1h-1zM339 799h1v1h-1zM339 806h1v1h-1zM339 814h1v1h-1zM339 821h1v1h-1zM339 829h1v1h-1zM339 844h1v1h-1zM339 851h1v1h-1zM339 858h1v1h-1zM339 866h1v1h-1zM339 873h1v1h-1zM339 881h1v1h-1zM339 888h1v1h-1zM339 896h1v1h-1zM339 903h1v1h-1zM452 174h1v1h-1zM452 181h1v1h-1zM452 189h1v1h-1zM452 196h1v1h-1zM452 204h1v1h-1zM452 211h1v1h-1zM452 219h1v1h-1zM452 226h1v1h-1zM452 233h1v1h-1zM452 248h1v1h-1zM452 256h1v1h-1zM452 263h1v1h-1zM452 271h1v1h-1zM452 278h1v1h-1zM452 286h1v1h-1zM452 293h1v1h-1zM452 300h1v1h-1zM452 308h1v1h-1zM452 323h1v1h-1zM452 330h1v1h-1zM452 338h1v1h-1zM452 345h1v1h-1zM452 353h1v1h-1zM452 360h1v1h-1zM452 367h1v1h-1zM452 375h1v1h-1zM452 382h1v1h-1zM452 397h1v1h-1zM452 405h1v1h-1zM452 412h1v1h-1zM452 419h1v1h-1zM452 427h1v1h-1zM452 434h1v1h-1zM452 442h1v1h-1zM452 449h1v1h-1zM452 457h1v1h-1zM452 472h1v1h-1zM452 479h1v1h-1zM452 486h1v1h-1zM452 494h1v1h-1zM452 501h1v1h-1zM452 509h1v1h-1zM452 516h1v1h-1zM452 524h1v1h-1zM452 531h1v1h-1zM452 546h1v1h-1zM452 553h1v1h-1zM452 561h1v1h-1zM452 568h1v1h-1zM452 576h1v1h-1zM452 583h1v1h-1zM452 591h1v1h-1zM452 598h1v1h-1zM452 605h1v1h-1zM452 620h1v1h-1zM452 628h1v1h-1zM452 635h1v1h-1zM452 643h1v1h-1zM452 650h1v1h-1zM452 658h1v1h-1zM452 665h1v1h-1zM452 672h1v1h-1zM452 680h1v1h-1zM452 695h1v1h-1zM452 702h1v1h-1zM452 710h1v1h-1zM452 717h1v1h-1zM452 725h1v1h-1zM452 732h1v1h-1zM452 739h1v1h-1zM452 747h1v1h-1zM452 754h1v1h-1zM452 769h1v1h-1zM452 777h1v1h-1zM452 784h1v1h-1zM452 791h1v1h-1zM452 799h1v1h-1zM452 806h1v1h-1zM452 814h1v1h-1zM452 821h1v1h-1zM452 829h1v1h-1zM452 844h1v1h-1zM452 851h1v1h-1zM452 858h1v1h-1zM452 866h1v1h-1zM452 873h1v1h-1zM452 881h1v1h-1zM452 888h1v1h-1zM452 896h1v1h-1zM452 903h1v1h-1zM565 174h1v1h-1zM565 181h1v1h-1zM565 189h1v1h-1zM565 196h1v1h-1zM565 204h1v1h-1zM565 211h1v1h-1zM565 219h1v1h-1zM565 226h1v1h-1zM565 233h1v1h-1zM565 248h1v1h-1zM565 256h1v1h-1zM565 263h1v1h-1zM565 271h1v1h-1zM565 278h1v1h-1zM565 286h1v1h-1zM565 293h1v1h-1zM565 300h1v1h-1zM565 308h1v1h-1zM565 323h1v1h-1zM565 330h1v1h-1zM565 338h1v1h-1zM565 345h1v1h-1zM565 353h1v1h-1zM565 360h1v1h-1zM565 367h1v1h-1zM565 375h1v1h-1zM565 382h1v1h-1zM565 397h1v1h-1zM565 405h1v1h-1zM565 412h1v1h-1zM565 419h1v1h-1zM565 427h1v1h-1zM565 434h1v1h-1zM565 442h1v1h-1zM565 449h1v1h-1zM565 457h1v1h-1zM565 472h1v1h-1zM565 479h1v1h-1zM565 486h1v1h-1zM565 494h1v1h-1zM565 501h1v1h-1zM565 509h1v1h-1zM565 516h1v1h-1zM565 524h1v1h-1zM565 531h1v1h-1zM565 546h1v1h-1zM565 553h1v1h-1zM565 561h1v1h-1zM565 568h1v1h-1zM565 576h1v1h-1zM565 583h1v1h-1zM565 591h1v1h-1zM565 598h1v1h-1zM565 605h1v1h-1zM565 620h1v1h-1zM565 628h1v1h-1zM565 635h1v1h-1zM565 643h1v1h-1zM565 650h1v1h-1zM565 658h1v1h-1zM565 665h1v1h-1zM565 672h1v1h-1zM565 680h1v1h-1zM565 695h1v1h-1zM565 702h1v1h-1zM565 710h1v1h-1zM565 717h1v1h-1zM565 725h1v1h-1zM565 732h1v1h-1zM565 739h1v1h-1zM565 747h1v1h-1zM565 754h1v1h-1zM565 769h1v1h-1zM565 777h1v1h-1zM565 784h1v1h-1zM565 791h1v1h-1zM565 799h1v1h-1zM565 806h1v1h-1zM565 814h1v1h-1zM565 821h1v1h-1zM565 829h1v1h-1zM565 844h1v1h-1zM565 851h1v1h-1zM565 858h1v1h-1zM565 866h1v1h-1zM565 873h1v1h-1zM565 881h1v1h-1zM565 888h1v1h-1zM565 896h1v1h-1zM565 903h1v1h-1zM678 174h1v1h-1zM678 181h1v1h-1zM678 189h1v1h-1zM678 196h1v1h-1zM678 204h1v1h-1zM678 211h1v1h-1zM678 219h1v1h-1zM678 226h1v1h-1zM678 233h1v1h-1zM678 248h1v1h-1zM678 256h1v1h-1zM678 263h1v1h-1zM678 271h1v1h-1zM678 278h1v1h-1zM678 286h1v1h-1zM678 293h1v1h-1zM678 300h1v1h-1zM678 308h1v1h-1zM678 323h1v1h-1zM678 330h1v1h-1zM678 338h1v1h-1zM678 345h1v1h-1zM678 353h1v1h-1zM678 360h1v1h-1zM678 367h1v1h-1zM678 375h1v1h-1zM678 382h1v1h-1zM678 397h1v1h-1zM678 405h1v1h-1zM678 412h1v1h-1zM678 419h1v1h-1zM678 427h1v1h-1zM678 434h1v1h-1zM678 442h1v1h-1zM678 449h1v1h-1zM678 457h1v1h-1zM678 472h1v1h-1zM678 479h1v1h-1zM678 486h1v1h-1zM678 494h1v1h-1zM678 501h1v1h-1zM678 509h1v1h-1zM678 516h1v1h-1zM678 524h1v1h-1zM678 531h1v1h-1zM678 546h1v1h-1zM678 553h1v1h-1zM678 561h1v1h-1zM678 568h1v1h-1zM678 576h1v1h-1zM678 583h1v1h-1zM678 591h1v1h-1zM678 598h1v1h-1zM678 605h1v1h-1zM678 620h1v1h-1zM678 628h1v1h-1zM678 635h1v1h-1zM678 643h1v1h-1zM678 650h1v1h-1zM678 658h1v1h-1zM678 665h1v1h-1zM678 672h1v1h-1zM678 680h1v1h-1zM678 695h1v1h-1zM678 702h1v1h-1zM678 710h1v1h-1zM678 717h1v1h-1zM678 725h1v1h-1zM678 732h1v1h-1zM678 739h1v1h-1zM678 747h1v1h-1zM678 754h1v1h-1zM678 769h1v1h-1zM678 777h1v1h-1zM678 784h1v1h-1zM678 791h1v1h-1zM678 799h1v1h-1zM678 806h1v1h-1zM678 814h1v1h-1zM678 821h1v1h-1zM678 829h1v1h-1zM678 844h1v1h-1zM678 851h1v1h-1zM678 858h1v1h-1zM678 866h1v1h-1zM678 873h1v1h-1zM678 881h1v1h-1zM678 888h1v1h-1zM678 896h1v1h-1zM678 903h1v1h-1zM791 174h1v1h-1zM791 181h1v1h-1zM791 189h1v1h-1zM791 196h1v1h-1zM791 204h1v1h-1zM791 211h1v1h-1zM791 219h1v1h-1zM791 226h1v1h-1zM791 233h1v1h-1zM791 248h1v1h-1zM791 256h1v1h-1zM791 263h1v1h-1zM791 271h1v1h-1zM791 278h1v1h-1zM791 286h1v1h-1zM791 293h1v1h-1zM791 300h1v1h-1zM791 308h1v1h-1zM791 323h1v1h-1zM791 330h1v1h-1zM791 338h1v1h-1zM791 345h1v1h-1zM791 353h1v1h-1zM791 360h1v1h-1zM791 367h1v1h-1zM791 375h1v1h-1zM791 382h1v1h-1zM791 397h1v1h-1zM791 405h1v1h-1zM791 412h1v1h-1zM791 419h1v1h-1zM791 427h1v1h-1zM791 434h1v1h-1zM791 442h1v1h-1zM791 449h1v1h-1zM791 457h1v1h-1zM791 472h1v1h-1zM791 479h1v1h-1zM791 486h1v1h-1zM791 494h1v1h-1zM791 501h1v1h-1zM791 509h1v1h-1zM791 516h1v1h-1zM791 524h1v1h-1zM791 531h1v1h-1zM791 546h1v1h-1zM791 553h1v1h-1zM791 561h1v1h-1zM791 568h1v1h-1zM791 576h1v1h-1zM791 583h1v1h-1zM791 591h1v1h-1zM791 598h1v1h-1zM791 605h1v1h-1zM791 620h1v1h-1zM791 628h1v1h-1zM791 635h1v1h-1zM791 643h1v1h-1zM791 650h1v1h-1zM791 658h1v1h-1zM791 665h1v1h-1zM791 672h1v1h-1zM791 680h1v1h-1zM791 695h1v1h-1zM791 702h1v1h-1zM791 710h1v1h-1zM791 717h1v1h-1zM791 725h1v1h-1zM791 732h1v1h-1zM791 739h1v1h-1zM791 747h1v1h-1zM791 754h1v1h-1zM791 769h1v1h-1zM791 777h1v1h-1zM791 784h1v1h-1zM791 791h1v1h-1zM791 799h1v1h-1zM791 806h1v1h-1zM791 814h1v1h-1zM791 821h1v1h-1zM791 829h1v1h-1zM791 844h1v1h-1zM791 851h1v1h-1zM791 858h1v1h-1zM791 866h1v1h-1zM791 873h1v1h-1zM791 881h1v1h-1zM791 888h1v1h-1zM791 896h1v1h-1zM791 903h1v1h-1zM904 174h1v1h-1zM904 181h1v1h-1zM904 189h1v1h-1zM904 196h1v1h-1zM904 204h1v1h-1zM904 211h1v1h-1zM904 219h1v1h-1zM904 226h1v1h-1zM904 233h1v1h-1zM904 248h1v1h-1zM904 256h1v1h-1zM904 263h1v1h-1zM904 271h1v1h-1zM904 278h1v1h-1zM904 286h1v1h-1zM904 293h1v1h-1zM904 300h1v1h-1zM904 308h1v1h-1zM904 323h1v1h-1zM904 330h1v1h-1zM904 338h1v1h-1zM904 345h1v1h-1zM904 353h1v1h-1zM904 360h1v1h-1zM904 367h1v1h-1zM904 375h1v1h-1zM904 382h1v1h-1zM904 397h1v1h-1zM904 405h1v1h-1zM904 412h1v1h-1zM904 419h1v1h-1zM904 427h1v1h-1zM904 434h1v1h-1zM904 442h1v1h-1zM904 449h1v1h-1zM904 457h1v1h-1zM904 472h1v1h-1zM904 479h1v1h-1zM904 486h1v1h-1zM904 494h1v1h-1zM904 501h1v1h-1zM904 509h1v1h-1zM904 516h1v1h-1zM904 524h1v1h-1zM904 531h1v1h-1zM904 546h1v1h-1zM904 553h1v1h-1zM904 561h1v1h-1zM904 568h1v1h-1zM904 576h1v1h-1zM904 583h1v1h-1zM904 591h1v1h-1zM904 598h1v1h-1zM904 605h1v1h-1zM904 620h1v1h-1zM904 628h1v1h-1zM904 635h1v1h-1zM904 643h1v1h-1zM904 650h1v1h-1zM904 658h1v1h-1zM904 665h1v1h-1zM904 672h1v1h-1zM904 680h1v1h-1zM904 695h1v1h-1zM904 702h1v1h-1zM904 710h1v1h-1zM904 717h1v1h-1zM904 725h1v1h-1zM904 732h1v1h-1zM904 739h1v1h-1zM904 747h1v1h-1zM904 754h1v1h-1zM904 769h1v1h-1zM904 777h1v1h-1zM904 784h1v1h-1zM904 791h1v1h-1zM904 799h1v1h-1zM904 806h1v1h-1zM904 814h1v1h-1zM904 821h1v1h-1zM904 829h1v1h-1zM904 844h1v1h-1zM904 851h1v1h-1zM904 858h1v1h-1zM904 866h1v1h-1zM904 873h1v1h-1zM904 881h1v1h-1zM904 888h1v1h-1zM904 896h1v1h-1zM904 903h1v1h-1zM1017 174h1v1h-1zM1017 181h1v1h-1zM1017 189h1v1h-1zM1017 196h1v1h-1zM1017 204h1v1h-1zM1017 211h1v1h-1zM1017 219h1v1h-1zM1017 226h1v1h-1zM1017 233h1v1h-1zM1017 248h1v1h-1zM1017 256h1v1h-1zM1017 263h1v1h-1zM1017 271h1v1h-1zM1017 278h1v1h-1zM1017 286h1v1h-1zM1017 293h1v1h-1zM1017 300h1v1h-1zM1017 308h1v1h-1zM1017 323h1v1h-1zM1017 330h1v1h-1zM1017 338h1v1h-1zM1017 345h1v1h-1zM1017 353h1v1h-1zM1017 360h1v1h-1zM1017 367h1v1h-1zM1017 375h1v1h-1zM1017 382h1v1h-1zM1017 397h1v1h-1zM1017 405h1v1h-1zM1017 412h1v1h-1zM1017 419h1v1h-1zM1017 427h1v1h-1zM1017 434h1v1h-1zM1017 442h1v1h-1zM1017 449h1v1h-1zM1017 457h1v1h-1zM1017 472h1v1h-1zM1017 479h1v1h-1zM1017 486h1v1h-1zM1017 494h1v1h-1zM1017 501h1v1h-1zM1017 509h1v1h-1zM1017 516h1v1h-1zM1017 524h1v1h-1zM1017 531h1v1h-1zM1017 546h1v1h-1zM1017 553h1v1h-1zM1017 561h1v1h-1zM1017 568h1v1h-1zM1017 576h1v1h-1zM1017 583h1v1h-1zM1017 591h1v1h-1zM1017 598h1v1h-1zM1017 605h1v1h-1zM1017 620h1v1h-1zM1017 628h1v1h-1zM1017 635h1v1h-1zM1017 643h1v1h-1zM1017 650h1v1h-1zM1017 658h1v1h-1zM1017 665h1v1h-1zM1017 672h1v1h-1zM1017 680h1v1h-1zM1017 695h1v1h-1zM1017 702h1v1h-1zM1017 710h1v1h-1zM1017 717h1v1h-1zM1017 725h1v1h-1zM1017 732h1v1h-1zM1017 739h1v1h-1zM1017 747h1v1h-1zM1017 754h1v1h-1zM1017 769h1v1h-1zM1017 777h1v1h-1zM1017 784h1v1h-1zM1017 791h1v1h-1zM1017 799h1v1h-1zM1017 806h1v1h-1zM1017 814h1v1h-1zM1017 821h1v1h-1zM1017 829h1v1h-1zM1017 844h1v1h-1zM1017 851h1v1h-1zM1017 858h1v1h-1zM1017 866h1v1h-1zM1017 873h1v1h-1zM1017 881h1v1h-1zM1017 888h1v1h-1zM1017 896h1v1h-1zM1017 903h1v1h-1zM1131 174h1v1h-1zM1131 181h1v1h-1zM1131 189h1v1h-1zM1131 196h1v1h-1zM1131 204h1v1h-1zM1131 211h1v1h-1zM1131 219h1v1h-1zM1131 226h1v1h-1zM1131 233h1v1h-1zM1131 248h1v1h-1zM1131 256h1v1h-1zM1131 263h1v1h-1zM1131 271h1v1h-1zM1131 278h1v1h-1zM1131 286h1v1h-1zM1131 293h1v1h-1zM1131 300h1v1h-1zM1131 308h1v1h-1zM1131 323h1v1h-1zM1131 330h1v1h-1zM1131 338h1v1h-1zM1131 345h1v1h-1zM1131 353h1v1h-1zM1131 360h1v1h-1zM1131 367h1v1h-1zM1131 375h1v1h-1zM1131 382h1v1h-1zM1131 397h1v1h-1zM1131 405h1v1h-1zM1131 412h1v1h-1zM1131 419h1v1h-1zM1131 427h1v1h-1zM1131 434h1v1h-1zM1131 442h1v1h-1zM1131 449h1v1h-1zM1131 457h1v1h-1zM1131 472h1v1h-1zM1131 479h1v1h-1zM1131 486h1v1h-1zM1131 494h1v1h-1zM1131 501h1v1h-1zM1131 509h1v1h-1zM1131 516h1v1h-1zM1131 524h1v1h-1zM1131 531h1v1h-1zM1131 546h1v1h-1zM1131 553h1v1h-1zM1131 561h1v1h-1zM1131 568h1v1h-1zM1131 576h1v1h-1zM1131 583h1v1h-1zM1131 591h1v1h-1zM1131 598h1v1h-1zM1131 605h1v1h-1zM1131 620h1v1h-1zM1131 628h1v1h-1zM1131 635h1v1h-1zM1131 643h1v1h-1zM1131 650h1v1h-1zM1131 658h1v1h-1zM1131 665h1v1h-1zM1131 672h1v1h-1zM1131 680h1v1h-1zM1131 695h1v1h-1zM1131 702h1v1h-1zM1131 710h1v1h-1zM1131 717h1v1h-1zM1131 725h1v1h-1zM1131 732h1v1h-1zM1131 739h1v1h-1zM1131 747h1v1h-1zM1131 754h1v1h-1zM1131 769h1v1h-1zM1131 777h1v1h-1zM1131 784h1v1h-1zM1131 791h1v1h-1zM1131 799h1v1h-1zM1131 806h1v1h-1zM1131 814h1v1h-1zM1131 821h1v1h-1zM1131 829h1v1h-1zM1131 844h1v1h-1zM1131 851h1v1h-1zM1131 858h1v1h-1zM1131 866h1v1h-1zM1131 873h1v1h-1zM1131 881h1v1h-1zM1131 888h1v1h-1zM1131 896h1v1h-1zM1131 903h1v1h-1z" fill="#ffffff" shape-rendering="crispEdges"/><path d="M0 550.5H1132M0 605.5H1132" stroke="#9a9a9a" stroke-width="1" shape-rendering="crispEdges"/><path d="M0 539.5H8.5V465.5H1132M8.5 539.5H1132" fill="none" stroke="#00c8d6" stroke-width="1" shape-rendering="crispEdges"/><path d="M27.5 539V504M14.5 520L27.5 504L40.5 520" fill="none" stroke="#8a8a8a" stroke-width="1"/><path d="M0 267.5H1132" stroke="#ffffff" stroke-width="1" shape-rendering="crispEdges"/><path d="M1.0 360.0 2.0 392.0 2.7 423.5 4.8 434.5 10.3 444.8 13.0 433.0 14.4 421.0 17.8 388.0 20.5 376.3 25.3 394.8 26.7 403.0 31.5 399.0 32.9 404.0 37.0 421.5 42.5 404.0 45.3 404.0 46.0 403.9 47.5 403.4 49.0 405.0 50.5 403.1 52.0 404.6 53.5 404.1 55.0 403.1 56.5 404.5 58.0 403.0 59.5 404.1 61.0 402.3 62.5 400.0 64.0 397.0 65.5 395.6 67.0 395.0 68.5 399.4 70.0 403.6 71.5 405.7 73.0 404.7 74.5 404.2 76.0 406.0 77.5 403.0 79.0 405.6 80.5 403.8 82.0 403.3 83.5 403.1 85.0 402.6 86.5 401.1 88.0 394.1 89.5 392.8 91.0 395.6 92.5 399.7 94.0 403.4 95.5 402.9 97.0 403.1 98.5 403.6 100.0 405.1 101.5 404.3 103.0 403.9 104.5 404.8 106.0 404.4 107.5 403.9 109.0 405.4 110.5 405.1 112.0 403.7 113.5 404.7 115.0 404.6 116.5 405.7 118.0 405.2 119.5 403.8 121.0 406.0 122.5 403.3 124.0 404.2 125.5 405.1 127.0 402.3 128.5 400.9 130.0 395.8 131.5 396.0 133.0 398.6 134.5 401.6 136.0 404.8 137.5 403.8 139.0 405.1 140.5 404.8 142.0 404.8 143.5 404.4 145.0 405.6 146.5 405.9 148.0 404.5 149.5 405.5 151.0 404.4 152.5 407.9 154.0 409.6 155.5 412.0 157.0 411.2 158.5 407.9 160.0 406.3 161.5 405.9 163.0 403.2 164.5 404.1 166.0 401.9 167.5 398.8 169.0 395.0 170.5 396.6 172.0 397.5 173.5 401.4 175.0 403.6 176.5 405.6 178.0 403.2 179.5 404.3 181.0 404.7 182.5 405.7 184.0 405.5 185.5 405.7 187.0 403.8 188.5 404.2 190.0 404.0 191.5 405.7 193.0 406.0 194.5 403.4 196.0 403.5 197.5 403.6 199.0 403.7 200.5 404.7 202.0 405.8 203.5 406.7 205.0 408.3 206.5 410.1 208.0 407.9 209.5 406.3 211.0 406.3 212.5 405.1 214.0 404.4 215.5 404.2 217.0 402.8 218.5 398.8 220.0 400.8 221.5 401.9 223.0 404.2 224.5 405.1 226.0 404.1 227.5 403.9 229.0 401.8 230.5 400.3 232.0 394.0 233.5 392.2 235.0 395.6 236.5 399.9 238.0 403.0 239.5 402.9 241.0 402.9 242.5 403.4 244.0 403.2 245.5 404.1 247.0 403.0 248.5 405.7 250.0 404.9 251.5 403.4 253.0 403.7 254.5 404.0 256.0 404.1 257.5 403.3 259.0 405.6 260.5 406.1 262.0 404.4 263.5 404.4 265.0 403.2 266.5 403.2 268.0 404.0 269.5 403.7 271.0 405.6 272.5 403.4 274.0 403.0 275.5 405.9 277.0 404.6 278.5 403.4 280.0 404.6 281.5 403.0 283.0 404.6 284.5 406.0 286.0 405.7 287.5 405.1 289.0 403.7 290.5 404.1 292.0 403.4 293.5 405.4 295.0 404.6 296.5 405.4 298.0 403.7 299.5 402.4 301.0 402.0 302.5 399.8 304.0 398.8 305.5 401.0 307.0 403.7 308.5 404.8 310.0 403.4 311.5 403.6 313.0 401.5 314.5 401.6 316.0 404.8 317.5 407.6 319.0 407.3 320.5 407.1 322.0 406.6 323.5 404.5 325.0 405.9 326.5 406.1 328.0 406.0 329.5 404.1 331.0 403.6 332.5 403.6 334.0 403.5 335.5 403.6 337.0 404.9 338.5 405.8 340.0 405.6 341.5 404.4 343.0 405.0 344.5 405.5 346.0 403.2 347.5 405.0 349.0 405.8 350.5 405.4 352.0 405.3 353.5 404.4 355.0 403.5 356.5 405.4 358.0 404.0 359.5 405.5 361.0 406.0 362.5 404.2 364.0 404.2 365.5 405.9 367.0 405.2 368.5 403.4 370.0 403.3 371.5 403.4 373.0 405.8 374.5 405.5 376.0 403.4 377.5 405.5 379.0 406.0 380.5 405.0 382.0 404.0 383.5 404.7 385.0 403.3 386.5 402.9 388.0 406.0 389.5 405.0 391.0 404.6 392.5 405.9 394.0 404.3 395.5 405.9 397.0 406.4 398.5 405.7 400.0 407.6 401.5 409.4 403.0 409.6 404.5 409.6 406.0 406.6 407.5 405.6 409.0 403.8 410.5 405.9 412.0 404.1 413.5 404.4 415.0 404.8 416.5 405.8 418.0 404.2 419.5 405.8 421.0 404.5 422.5 404.3 424.0 403.2 425.5 398.6 427.0 394.7 428.5 388.7 430.0 387.2 431.5 393.9 433.0 397.6 434.5 402.3 436.0 404.7 437.5 404.6 439.0 403.9 440.5 404.6 442.0 404.7 443.5 405.4 445.0 403.3 446.5 404.8 448.0 404.2 449.5 405.3 451.0 408.1 452.5 407.4 454.0 406.6 455.5 406.1 457.0 406.0 458.5 404.3 460.0 404.9 461.5 404.5 463.0 404.5 464.5 405.1 466.0 404.3 467.5 404.6 469.0 404.4 470.5 405.9 472.0 405.1 473.5 405.7 475.0 405.9 476.5 403.7 478.0 404.7 479.5 405.9 481.0 405.6 482.5 403.3 484.0 403.3 485.5 404.3 487.0 403.1 488.5 403.7 490.0 403.1 491.5 405.0 493.0 405.4 494.5 405.8 496.0 403.4 497.5 405.2 499.0 405.0 500.5 403.4 502.0 405.7 503.5 406.0 505.0 403.6 506.5 405.9 508.0 404.2 509.5 404.5 511.0 406.1 512.5 405.6 514.0 403.4 515.5 404.3 517.0 404.5 518.5 403.8 520.0 402.7 521.5 400.8 523.0 397.3 524.5 389.2 526.0 388.2 527.5 390.6 529.0 395.0 530.5 400.8 532.0 404.0 533.5 404.4 535.0 403.1 536.5 406.1 538.0 405.5 539.5 406.3 541.0 404.2 542.5 406.3 544.0 408.2 545.5 413.2 547.0 412.8 548.5 411.1 550.0 409.4 551.5 408.4 553.0 406.5 554.5 404.0 556.0 403.4 557.5 405.9 559.0 404.7 560.5 405.1 562.0 403.2 563.5 403.1 565.0 405.1 566.5 404.2 568.0 402.9 569.5 405.1 571.0 403.0 572.5 402.5 574.0 400.5 575.5 404.1 577.0 402.6 578.5 405.6 580.0 404.3 581.5 404.0 583.0 404.7 584.5 405.9 586.0 403.8 587.5 403.3 589.0 404.6 590.5 403.7 592.0 403.3 593.5 403.4 595.0 403.1 596.5 403.5 598.0 403.9 599.5 403.9 601.0 405.3 602.5 403.8 604.0 404.5 605.5 403.5 607.0 404.0 608.5 403.0 610.0 403.7 611.5 402.9 613.0 405.2 614.5 404.7 616.0 403.5 617.5 404.4 619.0 405.9 620.5 403.2 622.0 405.4 623.5 403.9 625.0 403.0 626.5 402.5 628.0 400.2 629.5 401.4 631.0 403.6 632.5 405.6 634.0 403.9 635.5 405.6 637.0 405.2 638.5 404.9 640.0 404.2 641.5 404.0 643.0 403.1 644.5 403.5 646.0 403.8 647.5 407.3 649.0 407.3 650.5 407.3 652.0 405.7 653.5 406.6 655.0 405.9 656.5 405.1 658.0 403.8 659.5 403.7 661.0 403.8 662.5 404.4 664.0 403.4 665.5 404.3 667.0 403.7 668.5 405.9 670.0 405.7 671.5 403.1 673.0 398.8 674.5 396.6 676.0 393.0 677.5 396.4 679.0 399.6 680.5 403.3 682.0 404.3 683.5 404.5 685.0 403.5 686.5 404.5 688.0 402.9 689.5 403.7 691.0 403.2 692.5 404.2 694.0 403.1 695.5 403.4 697.0 405.3 698.5 406.8 700.0 408.8 701.5 407.7 703.0 406.8 704.5 405.4 706.0 405.3 707.5 405.7 709.0 404.1 710.5 403.9 712.0 406.1 713.5 403.4 715.0 405.2 716.5 405.0 718.0 403.0 719.5 405.6 721.0 405.8 722.5 404.9 724.0 405.2 725.5 405.5 727.0 403.3 728.5 404.6 730.0 404.5 731.5 405.6 733.0 405.5 734.5 405.5 736.0 404.8 737.5 405.8 739.0 405.1 740.5 405.1 742.0 403.6 743.5 403.0 745.0 403.3 746.5 404.1 748.0 403.2 749.5 405.6 751.0 404.7 752.5 404.9 754.0 404.9 755.5 405.1 757.0 404.5 758.5 402.9 760.0 405.5 761.5 405.3 763.0 404.5 764.5 404.6 766.0 405.0 767.5 403.1 769.0 405.3 770.5 403.7 772.0 403.1 773.5 403.7 775.0 405.2 776.5 403.6 778.0 405.3 779.5 406.0 781.0 404.5 782.5 404.1 784.0 404.4 785.5 405.1 787.0 405.4 788.5 404.9 790.0 404.9 791.5 402.8 793.0 401.6 794.5 398.2 796.0 393.4 797.5 386.1 799.0 386.3 800.5 389.7 802.0 396.5 803.5 401.5 805.0 404.5 806.5 405.0 808.0 405.1 809.5 403.9 811.0 405.0 812.5 405.8 814.0 407.5 815.5 408.6 817.0 412.6 818.5 410.2 820.0 410.9 821.5 408.6 823.0 404.1 824.5 404.7 826.0 405.6 827.5 406.0 829.0 404.3 830.5 403.8 832.0 403.6 833.5 405.9 835.0 403.6 836.5 404.7 838.0 403.0 839.5 403.4 841.0 403.2 842.5 399.4 844.0 402.1 845.5 402.7 847.0 405.2 848.5 405.0 850.0 403.6 851.5 405.8 853.0 404.5 854.5 403.0 856.0 402.9 857.5 404.5 859.0 404.3 860.5 403.9 862.0 403.4 863.5 404.0 865.0 403.9 866.5 405.6 868.0 402.9 869.5 405.3 871.0 405.6 872.5 403.3 874.0 405.9 875.5 405.2 877.0 405.8 878.5 403.8 880.0 404.1 881.5 404.2 883.0 406.1 884.5 404.8 886.0 404.1 887.5 404.3 889.0 403.8 890.5 403.1 892.0 403.2 893.5 405.6 895.0 403.8 896.5 405.9 898.0 403.7 899.5 403.8 901.0 404.5 902.5 403.5 904.0 404.1 905.5 406.0 907.0 405.7 908.5 405.5 910.0 404.9 911.5 405.8 913.0 405.9 914.5 404.7 916.0 405.2 917.5 403.1 919.0 405.2 920.5 404.2 922.0 404.8 923.5 403.6 925.0 401.0 926.5 398.7 928.0 400.9 929.5 399.0 931.0 401.6 932.5 402.6 934.0 403.3 935.5 405.1 937.0 406.0 938.5 403.8 940.0 405.2 941.5 404.6 943.0 406.8 944.5 408.5 946.0 410.3 947.5 411.4 949.0 410.6 950.5 410.5 952.0 406.9 953.5 404.5 955.0 406.1 956.5 406.1 958.0 404.3 959.5 403.3 961.0 403.5 962.5 403.2 964.0 404.0 965.5 403.2 967.0 403.5 968.5 402.6 970.0 401.2 971.5 398.7 973.0 396.8 974.5 398.1 976.0 401.5 977.5 403.8 979.0 404.0 980.5 404.0 982.0 403.1 983.5 403.8 985.0 406.0 986.5 403.3 988.0 404.5 989.5 405.0 991.0 406.2 992.5 405.1 994.0 406.5 995.5 406.6 997.0 406.1 998.5 405.1 1000.0 406.1 1001.5 405.6 1003.0 405.7 1004.5 403.0 1006.0 403.0 1007.5 405.2 1009.0 405.8 1010.5 404.4 1012.0 404.8 1013.5 402.9 1015.0 404.2 1016.5 405.9 1018.0 405.5 1019.5 405.6 1021.0 406.0 1022.5 403.7 1024.0 403.2 1025.5 403.4 1027.0 404.6 1028.5 405.1 1030.0 405.9 1031.5 405.2 1033.0 405.0 1034.5 405.3 1036.0 404.4 1037.5 404.7 1039.0 403.0 1040.5 405.4 1042.0 403.6 1043.5 405.8 1045.0 405.0 1046.5 403.9 1048.0 403.3 1049.5 403.7 1051.0 404.9 1052.5 405.1 1054.0 403.3 1055.5 403.1 1057.0 404.6 1058.5 404.8 1060.0 404.1 1061.5 403.6 1063.0 404.8 1064.5 402.9 1066.0 403.9 1067.5 404.4 1069.0 406.0 1070.5 405.0 1072.0 405.7 1073.5 404.4 1075.0 403.7 1076.5 403.7 1078.0 406.0 1079.5 405.2 1081.0 403.9 1082.5 403.0 1084.0 404.5 1085.5 405.1 1087.0 404.2 1088.5 403.7 1090.0 405.0 1091.5 405.9 1093.0 403.6 1094.5 403.0 1096.0 404.0 1097.5 404.2 1099.0 405.1 1100.5 403.5 1102.0 405.5 1103.5 405.3 1105.0 404.5 1106.5 403.6 1108.0 406.0 1109.5 403.9 1111.0 405.5 1112.5 403.6 1114.0 403.6 1115.5 405.3 1116.5 397.0" fill="none" stroke="#d40000" stroke-width="1" shape-rendering="crispEdges"/><path d="M0.5 750.0 2.0 706.0 2.3 600.0 3.4 480.0 4.1 450.0 4.8 400.0 7.5 362.0 10.3 344.0 12.3 364.7 12.6 405.7 13.7 466.0 21.7 688.0 37.2 462.5 41.9 547.5 41.9 547.5 43.0 544.3 44.0 545.6 45.1 554.3 46.1 547.1 47.2 557.1 48.3 549.9 49.3 558.9 50.4 553.1 51.4 548.8 52.5 556.0 53.6 550.5 54.6 554.8 55.7 551.2 56.8 553.8 57.9 546.7 58.9 554.8 60.0 548.0 61.0 541.4 62.0 548.4 63.0 539.2 64.0 533.1 65.0 537.5 66.1 539.3 67.2 533.9 68.3 535.0 69.4 533.0 70.7 542.2 72.0 547.5 73.0 550.9 74.1 553.7 75.2 546.1 76.2 544.9 77.2 545.6 78.3 553.5 79.3 551.7 80.4 546.7 81.5 544.6 82.5 550.0 83.8 552.1 85.0 558.0 90.0 607.5 95.0 556.0 102.5 549.0 103.5 547.6 104.5 546.9 105.5 552.3 106.5 543.8 107.5 553.3 108.5 545.4 109.5 551.2 110.5 554.1 111.5 542.8 112.5 551.8 113.5 553.1 114.5 542.1 115.5 550.9 116.5 551.2 117.5 547.0 118.5 552.6 119.5 544.0 120.5 551.8 121.5 551.9 122.5 542.4 123.5 550.0 124.5 553.6 125.5 546.0 126.5 541.9 127.5 548.0 129.4 554.0 131.9 590.0 138.8 562.5 141.2 554.0 142.3 547.3 143.4 547.0 144.5 550.0 145.6 542.0 146.7 549.2 147.8 539.1 148.9 543.8 150.0 540.0 155.6 514.4 158.8 540.0 159.8 538.3 160.9 543.9 161.9 540.3 163.0 545.0 164.0 542.7 165.0 543.4 166.1 548.3 167.1 544.7 168.1 549.3 169.1 544.8 170.2 552.7 171.2 551.7 172.2 543.1 173.2 548.8 174.2 541.8 175.3 541.8 176.3 552.8 177.3 543.6 178.3 555.4 179.3 545.1 180.4 543.4 181.4 544.8 182.4 543.9 183.4 554.9 184.4 556.2 185.5 545.3 186.5 546.8 187.5 554.3 188.5 547.1 189.6 556.2 190.6 557.8 191.6 555.3 192.6 556.7 193.6 547.1 194.7 558.1 195.7 548.9 196.7 555.8 197.7 550.0 198.8 554.0 201.0 568.0 203.3 537.0 206.4 520.5 207.4 518.1 208.5 520.9 209.5 520.5 212.7 533.8 217.3 558.0 219.7 549.4 220.8 547.3 221.8 552.1 222.8 554.5 223.9 548.9 224.9 556.0 226.0 554.0 227.5 544.0 233.8 601.0 238.4 562.0 240.0 541.6 243.9 550.0 244.9 547.2 245.9 545.0 247.0 547.2 248.0 551.8 249.0 546.5 250.0 544.9 251.0 544.4 252.0 550.8 253.1 547.1 254.1 551.7 255.1 546.0 256.1 553.4 257.1 551.6 258.1 547.7 259.2 547.6 260.2 545.2 261.2 552.7 262.2 546.9 263.2 549.1 264.2 550.0 265.3 547.0 266.3 550.7 267.3 544.1 268.3 542.7 269.3 549.3 270.3 546.0 271.4 550.3 272.4 548.9 273.4 544.9 274.4 550.3 275.4 542.9 276.4 551.3 277.5 548.1 278.5 550.8 279.5 543.9 280.5 551.4 281.5 543.2 282.5 542.1 283.6 543.5 284.6 547.9 285.6 550.5 286.6 542.1 287.6 550.7 288.6 550.9 289.7 541.5 290.7 550.5 291.7 547.9 292.7 542.7 293.7 549.6 294.7 544.4 295.8 544.1 296.8 543.5 297.8 545.0 299.4 560.3 303.3 585.3 306.4 563.4 310.3 544.7 314.2 571.2 318.9 520.5 322.8 536.0 326.7 527.5 329.8 541.6 332.2 532.0 338.4 552.5 339.4 547.1 340.4 554.3 341.4 547.4 342.4 547.6 343.5 548.7 344.5 550.9 345.5 556.2 346.5 547.3 347.5 556.1 348.5 556.3 349.5 549.1 350.5 546.2 351.5 557.8 352.5 556.0 353.6 550.0 354.6 555.8 355.6 550.9 356.6 548.2 357.6 557.4 358.6 548.3 359.6 553.3 360.6 548.6 361.6 545.8 362.7 555.5 363.7 548.5 364.7 545.9 365.7 554.5 366.7 547.4 367.7 550.0 368.7 550.6 369.7 553.9 370.7 548.9 371.7 556.0 372.8 546.6 373.8 555.4 374.8 549.5 375.8 554.9 376.8 548.2 377.8 553.4 378.8 547.0 379.8 555.3 380.8 555.8 381.9 553.6 382.9 556.8 383.9 554.1 384.9 545.2 385.9 557.8 386.9 553.0 387.9 546.2 388.9 552.7 389.9 554.5 390.9 552.8 392.0 546.3 393.0 553.2 394.0 545.0 395.0 549.4 396.0 551.0 397.2 532.0 400.3 514.2 405.0 519.0 407.3 527.5 408.1 540.0 412.0 557.2 416.0 544.7 420.6 544.0 423.0 555.6 425.3 586.9 429.2 627.5 432.3 599.4 434.0 555.6 435.5 541.6 437.0 536.9 439.4 551.0 442.5 543.0 447.2 549.4 451.9 533.8 458.0 541.6 462.8 552.5 463.8 549.3 464.8 555.2 465.8 551.4 466.9 552.9 467.9 549.8 468.9 553.1 469.9 550.6 470.9 548.0 471.9 550.8 472.9 555.4 473.9 548.5 475.0 553.6 476.0 549.4 477.0 552.0 478.0 554.6 479.0 549.1 480.0 549.1 481.0 552.1 482.0 550.3 483.1 547.6 484.1 547.3 485.1 552.6 486.1 548.3 487.1 547.2 488.1 554.0 489.1 553.5 490.1 552.2 491.2 553.7 492.2 547.0 493.2 548.1 494.2 549.1 495.2 552.0 496.2 548.0 497.2 552.3 498.3 545.9 499.3 551.2 500.3 546.9 501.3 551.2 502.3 552.0 503.3 552.3 504.3 549.8 505.3 546.0 506.4 550.8 507.4 547.6 508.4 549.7 509.4 545.1 510.4 550.9 511.4 551.0 512.4 551.1 513.4 549.2 514.5 545.1 515.5 551.8 516.5 545.9 517.5 548.0 519.0 540.0 520.6 555.6 525.3 633.0 530.0 561.9 533.0 521.2 536.2 541.6 539.4 552.5 542.5 540.0 547.2 502.5 549.5 518.0 551.1 533.8 552.7 520.5 555.8 536.9 558.0 544.7 562.8 557.2 567.5 544.0 572.2 572.0 576.2 544.0 577.3 540.4 578.3 545.5 579.3 547.6 580.3 540.2 581.3 547.1 582.3 540.6 583.3 549.7 584.3 543.8 585.3 546.2 586.3 540.0 587.3 551.2 588.3 546.6 589.4 551.6 590.4 539.6 591.4 549.3 592.4 548.1 593.4 539.7 594.4 542.4 595.4 540.6 596.4 547.9 597.4 542.8 598.4 547.7 599.4 544.9 600.4 551.3 601.4 544.3 602.5 550.2 603.5 550.9 604.5 553.4 605.5 549.5 606.5 541.4 607.5 543.0 608.5 550.0 609.5 543.6 610.5 552.3 611.5 549.9 612.5 541.6 613.5 542.3 614.5 549.6 615.6 545.0 616.6 550.0 617.6 547.2 618.6 553.4 619.6 544.3 620.6 552.5 621.6 549.0 621.6 562.0 627.8 576.7 631.0 560.3 632.5 535.3 634.8 522.0 636.4 540.0 638.8 555.6 643.4 534.5 645.8 554.0 649.7 519.0 652.8 530.6 655.2 525.2 655.6 544.0 659.8 555.6 664.5 547.8 666.9 566.6 669.2 547.0 675.5 604.8 679.4 558.8 682.5 543.0 688.8 552.5 696.6 527.5 698.9 538.4 702.0 530.6 707.5 549.4 708.5 547.1 709.5 544.9 710.5 550.8 711.5 553.0 712.5 551.2 713.5 547.5 714.5 547.1 715.5 554.6 716.5 546.3 717.5 544.7 718.5 551.9 719.5 544.9 720.5 550.7 721.5 546.6 722.5 551.7 723.5 550.7 724.5 545.9 725.5 551.7 726.5 553.5 727.5 548.2 728.5 553.6 729.5 548.3 730.5 546.4 731.5 544.7 732.5 547.0 733.5 547.6 734.6 552.3 735.6 554.5 736.6 547.3 737.6 552.1 738.6 547.2 739.6 553.0 740.6 553.0 741.6 553.1 742.6 545.7 743.6 547.8 744.6 552.9 745.6 546.5 746.6 546.2 747.6 548.8 748.6 554.1 749.6 548.7 750.6 545.1 751.6 553.5 752.6 545.8 753.6 551.8 754.6 545.8 755.6 554.1 756.6 547.7 757.6 546.2 758.6 553.1 759.6 553.9 760.6 550.0 760.8 557.2 765.3 544.0 769.4 535.3 772.0 545.0 773.0 547.6 774.0 548.7 775.0 549.3 776.1 549.7 777.1 548.6 778.1 541.1 779.1 542.3 780.1 546.4 781.1 550.2 782.1 543.5 783.1 547.7 784.2 539.9 785.2 547.2 786.2 541.3 787.2 543.4 788.2 547.8 789.2 540.2 790.2 546.3 791.2 545.0 792.0 552.5 793.6 583.8 798.3 643.0 801.4 615.0 803.8 552.5 806.9 541.6 809.2 552.5 811.6 541.6 814.7 543.0 818.6 516.6 821.7 533.8 824.0 527.5 827.2 541.6 830.3 552.5 838.1 544.7 842.8 572.8 849.0 549.4 850.6 557.2 854.5 537.0 855.5 535.0 856.5 542.3 857.5 535.3 858.5 540.2 859.6 532.7 860.6 542.0 861.6 541.8 862.6 532.4 863.6 535.6 864.6 544.9 865.6 536.6 866.6 545.2 867.7 542.2 868.7 535.5 869.7 545.9 870.7 537.3 871.7 543.4 872.7 534.6 873.7 535.8 874.7 542.1 875.8 538.0 876.8 536.8 877.8 547.2 878.8 537.0 879.8 546.3 880.8 535.7 881.8 535.9 882.8 544.1 883.9 543.3 884.9 538.3 885.9 537.9 886.9 539.6 887.9 539.1 888.9 541.1 889.9 540.6 890.9 546.8 892.0 537.5 893.0 545.9 894.0 540.7 895.0 548.5 896.0 538.9 897.0 547.1 898.0 537.7 899.0 539.6 900.1 547.5 901.1 546.8 902.1 541.2 903.1 551.3 904.1 547.2 905.1 542.6 906.1 549.3 907.1 542.7 908.2 550.4 909.2 543.8 910.2 543.2 911.2 542.1 912.2 543.5 913.2 545.0 914.2 548.2 915.2 541.9 916.2 547.0 921.0 563.4 928.0 574.4 930.3 549.4 933.4 530.6 938.0 558.8 942.0 542.3 946.0 511.9 949.0 508.8 952.2 537.0 954.5 530.6 956.2 551.0 958.6 558.8 961.0 540.0 964.0 557.2 966.4 537.0 968.0 558.8 972.7 594.0 977.3 562.0 978.1 547.8 986.0 551.0 992.2 530.6 996.9 527.5 1001.6 538.4 1003.9 555.6 1004.5 551.0 1005.5 548.4 1006.5 547.6 1007.5 552.8 1008.5 549.7 1009.5 552.1 1010.5 553.7 1011.5 547.4 1012.5 546.6 1013.5 553.3 1014.5 550.1 1015.5 554.9 1016.5 555.3 1017.5 547.5 1018.5 553.3 1019.5 547.3 1020.5 553.5 1021.5 546.7 1022.5 547.5 1023.5 555.2 1024.5 554.2 1025.5 548.0 1026.5 554.9 1027.5 554.1 1028.5 555.5 1029.5 546.0 1030.5 552.7 1031.5 549.1 1032.5 554.9 1033.5 546.1 1034.5 553.8 1035.5 545.9 1036.5 555.8 1037.5 547.7 1038.5 553.0 1039.5 556.2 1040.5 554.4 1041.5 546.6 1042.5 555.7 1043.5 547.7 1044.5 549.4 1045.5 552.1 1046.5 549.4 1047.5 546.1 1048.5 553.2 1049.5 547.0 1050.5 554.4 1051.5 551.9 1052.5 548.1 1053.5 553.5 1054.5 549.4 1055.5 553.0 1056.5 548.7 1057.5 552.0 1058.5 549.6 1059.5 547.6 1060.5 553.6 1061.5 547.2 1062.5 546.9 1063.5 556.2 1064.5 555.6 1065.5 548.3 1066.5 555.8 1067.5 547.9 1068.5 555.8 1069.5 550.0 1070.5 546.2 1071.5 547.6 1072.5 548.9 1073.5 552.1 1074.5 548.2 1075.5 553.5 1076.5 547.1 1077.5 552.9 1078.5 548.5 1079.5 552.1 1080.5 556.1 1081.5 546.4 1082.5 555.3 1083.5 546.9 1084.5 555.8 1085.5 546.7 1086.5 554.2 1087.5 551.0 1089.0 543.0 1094.5 540.0 1096.9 549.4 1100.0 538.4 1104.7 555.6 1109.4 547.8 1111.7 555.6 1114.8 540.0 1116.4 583.8" fill="none" stroke="#6ad20a" stroke-width="1" shape-rendering="crispEdges"/><path d="M10.2 265.6 10.8 262.7 11.6 258.6 12.5 254.7 13.3 251.4 14.0 248.4 14.8 246.0 15.6 244.5 16.4 243.8 17.2 243.4 18.0 243.2 18.7 243.3 19.5 244.5 20.3 246.8 21.0 250.1 21.9 254.7 22.9 261.2 23.9 269.0 25.0 276.6 26.2 283.6 27.6 290.4 28.9 296.9 30.2 302.7 31.4 308.1 32.8 314.0 34.3 321.9 36.0 330.2 37.5 335.2 38.8 334.4 40.0 330.3 41.4 326.6 43.1 324.4 45.1 322.5 46.9 321.0 48.5 320.0 50.0 319.4 51.6 319.5 53.6 320.7 55.7 322.5 57.8 324.2 59.9 325.7 62.0 327.0 64.0 327.3 65.7 326.6 67.2 324.9 68.8 321.9 70.3 317.2 71.9 311.1 73.4 304.7 75.0 298.3 76.5 291.6 78.1 284.4 79.7 276.2 81.2 267.4 82.8 259.4 84.5 252.2 86.1 245.7 87.5 241.4 88.4 239.8 89.0 240.4 89.8 242.2 91.0 245.4 92.3 249.9 93.8 254.7 95.2 259.9 96.8 265.4 98.4 270.3 100.0 274.3 101.5 277.8 103.1 280.5 104.7 282.5 106.2 283.7 107.8 284.0 109.3 283.3 110.8 281.7 112.5 279.7 114.5 277.6 116.6 275.2 118.8 271.9 120.8 267.4 122.9 262.0 125.0 256.2 127.2 249.4 129.4 242.2 131.2 237.5 132.5 236.3 133.4 237.6 134.4 240.6 135.8 245.6 137.4 252.3 139.0 259.4 140.6 266.5 142.2 273.9 143.8 281.2 145.2 288.4 146.7 295.4 148.4 303.0 150.4 312.6 152.5 322.6 154.7 328.9 156.8 329.2 158.9 325.7 161.0 321.1 163.1 315.4 165.2 308.6 167.2 303.0 168.7 299.7 170.0 297.6 171.9 295.3 174.8 292.1 178.3 288.7 181.2 286.4 183.2 285.8 184.6 286.4 186.0 287.5 187.4 288.8 188.8 290.7 190.6 293.8 193.4 298.8 196.7 305.1 199.4 311.0 201.1 316.1 202.2 320.9 203.3 325.0 204.4 328.4 205.3 331.1 206.4 332.5 207.6 332.5 208.9 331.2 210.3 328.0 211.8 322.0 213.3 314.1 215.0 306.2 217.0 298.9 219.2 291.6 221.2 284.4 222.9 277.5 224.4 270.8 226.0 264.0 227.8 256.2 229.7 248.4 231.4 243.4 232.8 242.7 234.1 244.8 235.3 248.4 236.3 253.6 237.2 260.4 238.4 267.2 240.2 273.5 242.4 279.9 244.7 286.0 247.2 292.1 250.0 298.0 252.5 303.0 254.7 307.0 256.7 310.3 258.8 312.5 260.7 313.6 262.7 313.7 265.0 313.3 267.9 312.9 271.2 312.0 274.4 309.4 277.6 304.5 280.7 298.0 283.8 290.6 286.5 282.2 289.2 272.9 291.6 264.0 293.9 255.4 296.0 247.2 297.8 240.6 299.3 236.1 300.5 233.3 301.7 232.0 302.9 231.8 304.1 233.2 305.6 237.5 307.6 246.5 309.9 258.3 311.9 268.8 313.1 275.6 314.0 281.1 315.0 287.5 316.4 296.2 318.0 305.8 319.7 314.0 321.5 320.6 323.3 325.8 325.2 328.4 326.9 328.0 328.6 325.0 330.6 319.5 333.0 310.1 335.7 298.2 338.4 287.5 341.0 279.7 343.5 273.2 346.2 267.2 349.3 261.1 352.4 255.6 355.6 251.6 358.7 249.9 361.9 249.8 365.0 250.3 368.3 250.8 371.5 251.8 374.4 253.9 376.7 257.8 378.7 262.7 380.6 267.2 382.5 270.2 384.3 272.8 386.2 276.6 388.3 282.6 390.5 289.7 392.5 296.9 394.2 303.9 395.7 310.9 397.2 317.2 398.8 322.9 400.5 328.0 401.9 331.2 402.9 332.6 403.8 332.2 405.0 329.0 406.8 321.7 408.9 311.6 411.2 301.6 413.8 292.6 416.6 283.7 419.0 275.0 420.9 265.9 422.4 256.9 423.8 250.0 424.9 246.1 425.9 244.2 426.9 243.4 427.9 243.1 428.9 243.9 430.0 246.9 431.1 253.0 432.2 261.3 433.9 270.3 436.5 280.1 439.6 290.7 442.5 300.0 444.9 307.6 447.0 314.0 448.8 318.8 450.0 321.3 450.9 322.2 451.9 322.7 453.3 323.1 454.9 323.1 456.6 322.7 458.5 321.7 460.6 320.3 462.8 319.2 465.3 318.5 468.1 318.1 470.6 318.0 472.8 318.2 474.9 318.7 476.9 319.5 478.9 320.6 480.8 322.1 483.0 323.4 485.5 324.9 488.2 326.3 491.0 326.6 494.2 325.2 497.5 322.7 500.3 319.5 502.1 316.3 503.4 312.5 505.0 306.2 507.5 295.8 510.3 283.0 512.8 271.9 514.6 264.4 516.0 258.7 517.5 253.0 519.4 246.0 521.3 239.0 523.0 234.4 524.2 232.8 525.0 233.7 526.1 237.5 527.5 245.7 529.1 256.8 530.8 267.2 532.5 275.4 534.3 282.9 536.2 290.6 538.4 299.4 540.6 308.3 542.5 315.6 543.6 321.0 544.3 324.7 545.6 325.8 547.9 323.9 550.6 319.5 553.4 312.5 556.1 301.7 558.8 288.4 561.2 276.6 563.5 267.7 565.6 260.4 567.5 254.7 569.2 250.8 570.8 248.5 572.2 247.3 573.4 247.4 574.5 248.7 576.1 250.0 578.5 250.9 581.3 251.8 584.0 253.1 586.2 255.2 588.1 257.6 590.3 259.4 592.7 260.3 595.3 260.5 598.1 260.2 601.3 259.1 604.7 257.4 607.5 255.5 609.4 253.2 610.7 250.6 612.2 248.4 614.3 246.7 616.5 245.4 618.4 244.5 619.6 243.9 620.4 243.7 621.6 244.5 623.6 246.8 625.8 250.1 627.8 253.9 629.0 257.8 629.9 262.1 631.0 267.2 632.3 273.2 633.8 279.9 635.6 287.5 638.1 296.8 640.9 306.9 643.4 315.6 645.1 322.5 646.5 328.0 648.1 330.5 650.0 329.5 652.1 325.6 654.4 318.8 656.9 307.9 659.7 294.2 662.2 281.2 664.4 269.6 666.5 258.6 668.4 250.0 670.1 244.6 671.6 241.5 673.1 240.6 674.7 241.9 676.2 245.2 677.8 250.0 679.3 256.0 680.7 263.5 682.5 271.9 685.0 282.0 687.8 293.2 690.3 303.0 692.1 310.8 693.6 317.3 695.0 321.9 696.2 324.5 697.3 325.2 698.9 324.2 701.3 321.2 704.3 316.4 707.5 311.0 711.1 304.8 714.9 297.9 718.4 292.2 721.2 288.4 723.8 285.7 726.2 283.6 728.8 281.7 731.4 280.2 734.0 279.7 736.7 280.3 739.4 281.8 741.9 283.6 744.0 285.3 745.9 287.3 748.1 290.6 751.1 296.2 754.5 303.1 757.5 309.4 759.8 314.8 761.8 319.7 763.5 323.4 765.0 326.0 766.3 327.4 767.8 327.3 769.7 325.6 771.9 322.3 774.0 317.2 776.1 309.5 778.2 300.0 780.3 290.6 782.5 282.0 784.6 273.5 786.6 265.6 788.3 258.0 789.8 251.0 791.2 245.3 792.7 241.3 794.0 238.7 795.2 237.5 796.3 237.3 797.2 238.6 798.3 242.2 799.5 249.6 800.8 259.4 802.2 268.8 803.7 276.4 805.2 283.5 806.9 290.6 808.9 298.1 811.1 305.5 813.1 312.5 814.6 319.3 815.8 325.6 817.0 329.7 818.3 330.6 819.5 329.2 820.9 326.6 822.3 323.2 823.9 318.6 825.6 312.5 827.6 304.1 829.7 294.1 831.9 284.4 834.0 275.3 836.1 266.6 838.1 259.4 839.7 253.9 841.1 250.0 842.8 248.4 845.3 250.0 848.1 253.8 850.6 257.8 852.3 261.1 853.6 264.6 855.3 268.8 857.6 274.4 860.3 280.6 863.1 285.9 866.1 289.3 869.2 291.7 872.5 293.8 876.1 296.0 879.8 297.9 883.4 298.4 886.7 296.8 889.8 293.8 892.8 290.6 895.6 287.8 898.2 284.8 900.6 281.2 902.8 277.0 904.7 272.3 906.9 267.2 909.6 261.3 912.4 255.0 914.7 250.0 916.0 247.0 916.8 245.3 917.8 244.2 919.2 243.5 920.9 243.6 922.5 244.5 924.1 246.1 925.6 248.6 927.2 253.1 928.7 260.5 930.1 269.9 931.9 279.7 934.3 289.7 937.0 300.0 939.7 309.4 942.2 318.4 944.6 326.6 946.7 331.2 948.2 331.2 949.3 327.7 950.6 321.9 952.3 313.3 954.3 302.5 956.2 292.2 958.3 283.4 960.5 275.1 962.5 267.2 964.2 259.0 965.8 251.2 967.2 245.3 968.6 242.2 969.9 241.1 971.1 241.1 972.2 241.7 973.1 243.4 974.2 246.9 975.4 252.9 976.6 260.6 978.1 268.8 980.1 277.0 982.3 285.5 984.4 293.8 986.3 301.8 988.1 309.4 989.8 315.6 991.4 319.9 993.0 322.8 994.5 324.2 995.8 324.3 997.0 322.9 998.4 320.3 1000.3 316.1 1002.4 310.7 1004.7 304.7 1007.2 298.1 1010.0 290.9 1012.5 284.4 1014.6 279.3 1016.6 274.9 1018.8 270.3 1021.2 264.9 1023.9 259.3 1026.6 254.7 1029.1 251.6 1031.7 249.4 1034.4 247.7 1037.4 246.4 1040.6 245.6 1043.8 245.3 1046.9 245.3 1050.0 245.6 1053.1 246.9 1056.3 249.4 1059.6 252.7 1062.5 256.2 1064.8 259.7 1066.8 263.3 1068.8 267.2 1070.8 271.4 1072.8 275.9 1075.0 281.2 1077.6 288.2 1080.4 295.9 1082.8 303.0 1084.6 309.0 1086.0 314.4 1087.5 318.8 1089.0 322.4 1090.5 325.2 1092.2 325.8 1094.1 323.8 1096.2 319.7 1098.4 314.0 1101.0 306.0 1103.8 296.4 1106.2 287.5 1108.0 280.4 1109.5 274.1 1110.9 267.2 1112.6 258.3 1114.4 248.9 1115.6 242.2" fill="none" stroke="#e6cdfa" stroke-width="1" shape-rendering="crispEdges"/><circle cx="820.5" cy="326.5" r="3" fill="#e6cdfa"/></svg>
<svg width="16" height="22" style="position:absolute;left:818px;top:627px" viewBox="0 0 16 22"><path d="M1.5 1.5V17.5L5.5 13.5L8.5 20L10.5 19L7.8 12.5H13z" fill="#000" stroke="#fff" stroke-width="1"/></svg>
<div style="left:0px;top:912px;width:70px;height:23px;background:linear-gradient(#b80000,#e00000);border:1px solid #7a0000;box-sizing:border-box"></div>
<div style="left:70px;top:912px;width:70px;height:23px;background:linear-gradient(#00b8b8,#00e0e0);border:1px solid #00a0a0;box-sizing:border-box"></div>
<div style="left:140px;top:912px;width:70px;height:23px;background:linear-gradient(#58b000,#6ad800);border:1px solid #3f8a00;box-sizing:border-box"></div>
<div style="left:210px;top:912px;width:70px;height:23px;background:linear-gradient(#5c00c0,#7000e0);border:1px solid #4a00a0;box-sizing:border-box"></div>
<div style="left:280px;top:912px;width:70px;height:23px;background:linear-gradient(#fbfbfa,#dcdbd7);border:1px solid #a9a79f;border-radius:2px;box-shadow:inset 1px 1px 0 #fff;box-sizing:border-box;"></div>
<div style="left:350px;top:912px;width:70px;height:23px;background:linear-gradient(#fbfbfa,#dcdbd7);border:1px solid #a9a79f;border-radius:2px;box-shadow:inset 1px 1px 0 #fff;box-sizing:border-box;"></div>
<div style="left:420px;top:912px;width:70px;height:23px;background:linear-gradient(#fbfbfa,#dcdbd7);border:1px solid #a9a79f;border-radius:2px;box-shadow:inset 1px 1px 0 #fff;box-sizing:border-box;"></div>
<div style="left:490px;top:912px;width:70px;height:23px;background:linear-gradient(#fbfbfa,#dcdbd7);border:1px solid #a9a79f;border-radius:2px;box-shadow:inset 1px 1px 0 #fff;box-sizing:border-box;"></div>
<div style="left:560px;top:912px;width:70px;height:23px;background:linear-gradient(#fbfbfa,#dcdbd7);border:1px solid #a9a79f;border-radius:2px;box-shadow:inset 1px 1px 0 #fff;box-sizing:border-box;"></div>
<div style="left:630px;top:912px;width:70px;height:23px;background:linear-gradient(#fbfbfa,#dcdbd7);border:1px solid #a9a79f;border-radius:2px;box-shadow:inset 1px 1px 0 #fff;box-sizing:border-box;"></div>
<div style="left:700px;top:912px;width:70px;height:23px;background:linear-gradient(#fbfbfa,#dcdbd7);border:1px solid #a9a79f;border-radius:2px;box-shadow:inset 1px 1px 0 #fff;box-sizing:border-box;"></div>
<div style="left:770px;top:912px;width:70px;height:23px;background:linear-gradient(#fbfbfa,#dcdbd7);border:1px solid #a9a79f;border-radius:2px;box-shadow:inset 1px 1px 0 #fff;box-sizing:border-box;"></div>
<div style="left:840px;top:912px;width:70px;height:23px;background:linear-gradient(#fbfbfa,#dcdbd7);border:1px solid #a9a79f;border-radius:2px;box-shadow:inset 1px 1px 0 #fff;box-sizing:border-box;"></div>
<div style="left:910px;top:912px;width:70px;height:23px;background:linear-gradient(#fbfbfa,#dcdbd7);border:1px solid #a9a79f;border-radius:2px;box-shadow:inset 1px 1px 0 #fff;box-sizing:border-box;"></div>
<div style="left:980px;top:912px;width:70px;height:23px;background:linear-gradient(#fbfbfa,#dcdbd7);border:1px solid #a9a79f;border-radius:2px;box-shadow:inset 1px 1px 0 #fff;box-sizing:border-box;"></div>
<div style="left:1050px;top:912px;width:81px;height:23px;background:linear-gradient(#fbfbfa,#dcdbd7);border:1px solid #a9a79f;border-radius:2px;box-shadow:inset 1px 1px 0 #fff;box-sizing:border-box;"></div>
<div style="left:1px;top:943px;width:1130px;height:31px;border:1px solid #aaa89f;box-sizing:border-box"></div>
<div style="left:2px;top:944px;width:1128px;height:29px;border:1px solid #ffffff;border-right:none;border-bottom:none;box-sizing:border-box"></div>
<div style="left:1131px;top:943px;width:1px;height:32px;background:#fff"></div>
<div style="left:1px;top:974px;width:1131px;height:1px;background:#fff"></div>
<div style="left:4px;top:937px;width:115px;height:12px;background:#edecea"></div>
<div style="left:31px;top:950px;width:1px;height:23px;background:#cfcdc8"></div>
<div style="left:32px;top:950px;width:1px;height:23px;background:#fff"></div>
<div style="left:39px;top:951px;width:384px;height:22px;background:linear-gradient(#fbfbfa,#dcdbd7);border:1px solid #a9a79f;border-radius:2px;box-shadow:inset 1px 1px 0 #fff;box-sizing:border-box;"></div>
<div style="left:1132px;top:96px;width:72px;height:79px;border:1px solid #aaa89f;box-sizing:border-box"></div>
<div style="left:1133px;top:97px;width:70px;height:77px;border:1px solid #ffffff;border-right:none;border-bottom:none;box-sizing:border-box"></div>
<div style="left:1204px;top:96px;width:1px;height:80px;background:#fff"></div>
<div style="left:1132px;top:175px;width:73px;height:1px;background:#fff"></div>
<div style="left:1135px;top:90px;width:65px;height:12px;background:#edecea"></div>
<div style="left:1137.0px;top:105.0px;width:11px;height:11px;border-radius:50%;border:1px solid #a6a49d;background:linear-gradient(#fdfdfd,#e6e6e4);box-sizing:border-box"></div>
<div style="left:1137.0px;top:123.0px;width:11px;height:11px;border-radius:50%;border:1px solid #a6a49d;background:linear-gradient(#fdfdfd,#e6e6e4);box-sizing:border-box"></div>
<div style="left:1137.0px;top:141.0px;width:11px;height:11px;border-radius:50%;border:1px solid #a6a49d;background:linear-gradient(#fdfdfd,#e6e6e4);box-sizing:border-box"></div>
<div style="left:1137.0px;top:159.0px;width:11px;height:11px;border-radius:50%;border:1px solid #a6a49d;background:linear-gradient(#fdfdfd,#e6e6e4);box-sizing:border-box"></div>
<div style="left:1140.0px;top:162.0px;width:5px;height:5px;border-radius:50%;background:#111"></div>
<div style="left:1206px;top:96px;width:73px;height:878px;border:1px solid #aaa89f;box-sizing:border-box"></div>
<div style="left:1207px;top:97px;width:71px;height:876px;border:1px solid #ffffff;border-right:none;border-bottom:none;box-sizing:border-box"></div>
<div style="left:1279px;top:96px;width:1px;height:879px;background:#fff"></div>
<div style="left:1206px;top:974px;width:74px;height:1px;background:#fff"></div>
<div style="left:1210px;top:90px;width:47px;height:12px;background:#edecea"></div>
<div style="left:1211.0px;top:105.0px;width:11px;height:11px;border-radius:50%;border:1px solid #a6a49d;background:linear-gradient(#fdfdfd,#e6e6e4);box-sizing:border-box"></div>
<div style="left:1214.0px;top:108.0px;width:5px;height:5px;border-radius:50%;background:#111"></div>
<div style="left:1211.0px;top:123.0px;width:11px;height:11px;border-radius:50%;border:1px solid #a6a49d;background:linear-gradient(#fdfdfd,#e6e6e4);box-sizing:border-box"></div>
<div style="left:1209px;top:138px;width:68px;height:23px;background:linear-gradient(#fbfbfa,#dcdbd7);border:1px solid #a9a79f;border-radius:2px;box-shadow:inset 1px 1px 0 #fff;box-sizing:border-box;"></div>
<div style="left:1218px;top:177px;width:15px;height:695px;background:linear-gradient(90deg,#dcdbd7,#f5f5f3);border-right:1px solid #d9d7d4;border-radius:2px;box-sizing:border-box"></div>
<div style="left:1218px;top:177px;width:15px;height:563px;background:linear-gradient(90deg,#cac8c5,#e6e5e3);border-right:1px solid #d6d4d1;border-radius:2px 2px 0 0;box-sizing:border-box"></div>
<div style="left:1253px;top:177px;width:15px;height:695px;background:linear-gradient(90deg,#dcdbd7,#f5f5f3);border-right:1px solid #d9d7d4;border-radius:2px;box-sizing:border-box"></div>
<div style="left:1253px;top:177px;width:15px;height:15px;background:linear-gradient(90deg,#cac8c5,#e6e5e3);border-right:1px solid #d6d4d1;border-radius:2px 2px 0 0;box-sizing:border-box"></div>
<div style="left:1218px;top:739px;width:15px;height:31px;background:linear-gradient(90deg,#fafafa,#d9d9d5);border:1px solid #a4a29c;box-shadow:inset 1px 1px 0 #fff;box-sizing:border-box"></div>
<div style="left:1253px;top:191px;width:15px;height:31px;background:linear-gradient(90deg,#e8e8e6,#c8c6c4);border:1px solid #9b9895;box-shadow:inset 1px 1px 0 #fff;box-sizing:border-box"></div>
<div style="left:1132px;top:184px;width:72px;height:694px;border:1px solid #aaa89f;box-sizing:border-box"></div>
<div style="left:1133px;top:185px;width:70px;height:692px;border:1px solid #ffffff;border-right:none;border-bottom:none;box-sizing:border-box"></div>
<div style="left:1204px;top:184px;width:1px;height:695px;background:#fff"></div>
<div style="left:1132px;top:878px;width:73px;height:1px;background:#fff"></div>
<div style="left:1135px;top:178px;width:51px;height:12px;background:#edecea"></div>
<div style="left:1143px;top:207px;width:15px;height:665px;background:linear-gradient(90deg,#dcdbd7,#f5f5f3);border-right:1px solid #d9d7d4;border-radius:2px;box-sizing:border-box"></div>
<div style="left:1143px;top:207px;width:15px;height:309px;background:linear-gradient(90deg,#cac8c5,#e6e5e3);border-right:1px solid #d6d4d1;border-radius:2px 2px 0 0;box-sizing:border-box"></div>
<div style="left:1178px;top:207px;width:15px;height:665px;background:linear-gradient(90deg,#dcdbd7,#f5f5f3);border-right:1px solid #d9d7d4;border-radius:2px;box-sizing:border-box"></div>
<div style="left:1178px;top:207px;width:15px;height:86px;background:linear-gradient(90deg,#cac8c5,#e6e5e3);border-right:1px solid #d6d4d1;border-radius:2px 2px 0 0;box-sizing:border-box"></div>
<div style="left:1143px;top:515px;width:15px;height:31px;background:linear-gradient(90deg,#e8e8e6,#c8c6c4);border:1px solid #9b9895;box-shadow:inset 1px 1px 0 #fff;box-sizing:border-box"></div>
<div style="left:1178px;top:292px;width:15px;height:31px;background:linear-gradient(90deg,#e8e8e6,#c8c6c4);border:1px solid #9b9895;box-shadow:inset 1px 1px 0 #fff;box-sizing:border-box"></div>
<div style="left:1132px;top:877px;width:1px;height:97px;background:#aaa89f"></div>
<div style="left:1133px;top:877px;width:1px;height:97px;background:#fff"></div>
<div style="left:1207px;top:877px;width:71px;height:1px;background:#aaa89f"></div>
<div style="left:1208px;top:878px;width:70px;height:1px;background:#fff"></div>
<div style="left:1134px;top:912px;width:69px;height:39px;background:linear-gradient(#fbfbfa,#dcdbd7);border:1px solid #a9a79f;border-radius:2px;box-shadow:inset 1px 1px 0 #fff;box-sizing:border-box;"></div>
<div style="left:1134px;top:950px;width:69px;height:23px;background:linear-gradient(#fbfbfa,#dcdbd7);border:1px solid #a9a79f;border-radius:2px;box-shadow:inset 1px 1px 0 #fff;box-sizing:border-box;"></div>
<div style="left:1208px;top:912px;width:70px;height:23px;background:linear-gradient(#fbfbfa,#dcdbd7);border:1px solid #a9a79f;border-radius:2px;box-shadow:inset 1px 1px 0 #fff;box-sizing:border-box;"></div>
<div style="left:1208px;top:936px;width:70px;height:37px;background:linear-gradient(#fbfbfa,#dcdbd7);border:1px solid #a9a79f;border-radius:2px;box-shadow:inset 1px 1px 0 #fff;box-sizing:border-box;"></div>
<div style="left:0px;top:974px;width:1280px;height:50px;background:radial-gradient(ellipse 900px 260px at 40% 40px,#475959,#3c4c4c 70%,#364545)"></div>
<div style="left:0px;top:974px;width:1280px;height:16px;background:linear-gradient(rgba(10,15,15,0.85),rgba(10,15,15,0))"></div>
<svg style="position:absolute;left:0px;top:0px" width="30" height="30" viewBox="0 0 30 30"><defs><linearGradient id="xb" x1="0" y1="0" x2="1" y2="1"><stop offset="0" stop-color="#d8f3fc"/><stop offset="0.5" stop-color="#7fd0f0"/><stop offset="1" stop-color="#4fb6e4"/></linearGradient></defs>
<path d="M4.5 9L10.5 3L26 19.5L20.5 25.5Z" fill="url(#xb)"/>
<path d="M20.5 4L26 9L10 25.5L5 20.5Z" fill="url(#xb)"/>
<path d="M4 8.5L10.5 12.5L11 13L9.5 14.5L10 19.5L9.5 20.5L10 21.5L11.5 20.5L12.5 19.5L20 19.5L21.5 20.5L23 20L22 18.5L23 15.5L25.5 14.5L26 13L24.5 11.5L21.5 11L21 9L20 9.5L19 11L18 9.5L17.5 11.5L11 12Z" fill="#000" stroke="#000" stroke-width="0.6" stroke-linejoin="round"/></svg>
<svg style="position:absolute;left:125px;top:7px" width="17" height="16" viewBox="0 0 17 16"><path d="M1.4 0.5V12.8" stroke="#555" stroke-width="1.2"/>
<text x="8.8" y="13" font-family="Liberation Serif" font-weight="bold" font-size="17.5" text-anchor="middle" fill="#000" transform="scale(1.05,1)">X</text>
<path d="M3 14.6H15.5" stroke="#333" stroke-width="1.2"/></svg>
<svg style="position:absolute;left:305px;top:7px" width="16" height="16" viewBox="0 0 16 16"><defs><radialGradient id="ffb" cx="0.55" cy="0.35" r="0.6"><stop offset="0" stop-color="#4cc3f0"/><stop offset="0.6" stop-color="#0f66b0"/><stop offset="1" stop-color="#0a2a6a"/></radialGradient>
<linearGradient id="ffo" x1="0" y1="0" x2="0.3" y2="1"><stop offset="0" stop-color="#f08a1a"/><stop offset="0.7" stop-color="#e0501a"/><stop offset="1" stop-color="#c82a14"/></linearGradient></defs>
<circle cx="8" cy="8" r="7.2" fill="url(#ffo)"/>
<path d="M12.5 2.8A7 7 0 0 1 14.8 10.5A7 7 0 0 1 11 14L10 11Z" fill="#ffd23a"/>
<path d="M3.6 3.2L5 4.5L7 3.5L6.5 5.5L8.5 5.5L7.5 7L9.5 9L11.5 9.5L9 11.5L12 10.5A5.5 5.5 0 0 0 12.5 3A5.5 5.5 0 0 0 3.6 3.2Z" fill="url(#ffb)"/></svg>
<svg style="position:absolute;left:484px;top:8px" width="14" height="13" viewBox="0 0 14 13"><rect x="0.5" y="0.5" width="13" height="12" fill="#f2f2f2" stroke="#8a8a8a"/><rect x="0.5" y="0.5" width="13" height="2" fill="#3d6db2"/><rect x="1" y="3" width="12" height="9" fill="url(#wg484)"/><defs><linearGradient id="wg484" x1="0" y1="0" x2="0" y2="1"><stop offset="0" stop-color="#fff"/><stop offset="1" stop-color="#d6d6d6"/></linearGradient></defs></svg>
<svg style="position:absolute;left:665px;top:7px" width="16" height="16" viewBox="0 0 16 16"><defs><linearGradient id="tg665" x1="0" y1="0" x2="0" y2="1"><stop offset="0" stop-color="#a8c890"/><stop offset="0.25" stop-color="#6a8a52"/><stop offset="1" stop-color="#1a2a12"/></linearGradient></defs>
<rect x="0.8" y="0.8" width="14.4" height="14.6" rx="2.5" fill="#d8d8d6" stroke="#7a7c78" stroke-width="1"/>
<rect x="2.5" y="2.5" width="11" height="11" rx="1" fill="url(#tg665)" stroke="#000" stroke-width="1"/>
<path d="M4.3 5.5L6.2 7L4.3 8.5" stroke="#fff" stroke-width="0.9" fill="none"/><path d="M7 10.2H9.5" stroke="#fff" stroke-width="0.9"/></svg>
<svg style="position:absolute;left:845px;top:7px" width="16" height="16" viewBox="0 0 16 16"><defs><linearGradient id="tg845" x1="0" y1="0" x2="0" y2="1"><stop offset="0" stop-color="#a8c890"/><stop offset="0.25" stop-color="#6a8a52"/><stop offset="1" stop-color="#1a2a12"/></linearGradient></defs>
<rect x="0.8" y="0.8" width="14.4" height="14.6" rx="2.5" fill="#d8d8d6" stroke="#7a7c78" stroke-width="1"/>
<rect x="2.5" y="2.5" width="11" height="11" rx="1" fill="url(#tg845)" stroke="#000" stroke-width="1"/>
<path d="M4.3 5.5L6.2 7L4.3 8.5" stroke="#fff" stroke-width="0.9" fill="none"/><path d="M7 10.2H9.5" stroke="#fff" stroke-width="0.9"/></svg>
<svg style="position:absolute;left:1191px;top:1px" width="26" height="28" viewBox="0 0 26 28"><defs><linearGradient id="ug" x1="0" y1="0" x2="1" y2="1"><stop offset="0" stop-color="#fafafa"/><stop offset="1" stop-color="#a8a8a8"/></linearGradient></defs>
<rect x="0.5" y="0.5" width="25" height="27" fill="#ececea" stroke="#a9a89f"/>
<ellipse cx="14" cy="21" rx="9" ry="3" fill="#000" opacity="0.12"/>
<path d="M4 7L8 3.5L16.5 8.5L15.5 13L11.5 16.5L3 11Z" fill="url(#ug)" stroke="#444" stroke-width="0.9" stroke-linejoin="round"/>
<path d="M4.5 6.5L7.5 4L9 5L6 7.5Z" fill="#f3c24a"/>
<path d="M15 13L20.5 18.5M13.5 14.5L19 20" stroke="#333" stroke-width="1.4"/></svg>
<svg style="position:absolute;left:1188px;top:31px" width="92" height="27" viewBox="0 0 92 27"><defs><linearGradient id="wbg" x1="0" y1="0" x2="0" y2="1"><stop offset="0" stop-color="#b4b4b2"/><stop offset="0.45" stop-color="#d6d6d4"/><stop offset="1" stop-color="#cdcdcb"/></linearGradient></defs>
<path d="M0.5 0V20A6 6 0 0 0 6.5 26H92V0Z" fill="url(#wbg)" stroke="#a3a3a1" stroke-width="1"/>
<path d="M14.8 9.8L10 14.6H12.9V18.9H16.7V14.6H19.6Z" fill="#fff" stroke="#8a8a8a" stroke-width="1" stroke-linejoin="round"/>
<rect x="33.5" y="16.5" width="7" height="3" fill="#fff" stroke="#8a8a8a" stroke-width="1"/>
<rect x="58" y="10.5" width="6.5" height="6.5" fill="none" stroke="#8a8a8a" stroke-width="3"/><rect x="58" y="10.5" width="6.5" height="6.5" fill="none" stroke="#fff" stroke-width="1.2"/>
<rect x="54.5" y="14" width="6.5" height="6.5" fill="#cfcfcd" stroke="#8a8a8a" stroke-width="3"/><rect x="54.5" y="14" width="6.5" height="6.5" fill="#cfcfcd" stroke="#fff" stroke-width="1.2"/><rect x="56.5" y="16" width="2.5" height="2.5" fill="#a0a0a0"/>
<path d="M77.5 11L85 18.5M85 11L77.5 18.5" stroke="#8a8a8a" stroke-width="3.4" stroke-linecap="square"/>
<path d="M77.5 11L85 18.5M85 11L77.5 18.5" stroke="#fff" stroke-width="1.6" stroke-linecap="square"/></svg>
<svg style="position:absolute;left:487px;top:975px" width="306" height="49" viewBox="0 0 306 49"><defs>
<linearGradient id="dtr" x1="0" y1="0" x2="0" y2="1"><stop offset="0" stop-color="#d2d2c4"/><stop offset="1" stop-color="#84846e"/></linearGradient>
<linearGradient id="dbz" x1="0" y1="0" x2="0" y2="1"><stop offset="0" stop-color="#d6d6d4"/><stop offset="1" stop-color="#8a8a88"/></linearGradient>
<linearGradient id="dsc" x1="0" y1="0" x2="0" y2="1"><stop offset="0" stop-color="#8aa870"/><stop offset="0.4" stop-color="#4a6a3a"/><stop offset="1" stop-color="#1e2e16"/></linearGradient>
<linearGradient id="dor" x1="0" y1="0" x2="0" y2="1"><stop offset="0" stop-color="#f0a84a"/><stop offset="1" stop-color="#c87818"/></linearGradient>
<radialGradient id="dgl" cx="0.4" cy="0.35" r="0.7"><stop offset="0" stop-color="#d8ecfc"/><stop offset="0.6" stop-color="#4f8fd0"/><stop offset="1" stop-color="#25559a"/></radialGradient>
<radialGradient id="dlens" cx="0.45" cy="0.4" r="0.6"><stop offset="0" stop-color="#f4f9ff"/><stop offset="1" stop-color="#9cc0ea"/></radialGradient>
<linearGradient id="dfb" x1="0" y1="0" x2="0" y2="1"><stop offset="0" stop-color="#8ab4e4"/><stop offset="1" stop-color="#5a8cca"/></linearGradient>
<linearGradient id="dfg" x1="0" y1="0" x2="0" y2="1"><stop offset="0" stop-color="#a8a8a6"/><stop offset="1" stop-color="#6a6a68"/></linearGradient>
</defs>
<rect x="0" y="0" width="306" height="49" fill="#efefee"/>
<path d="M11.5 16L37 16L43.5 34L6.5 34Z" fill="url(#dtr)" stroke="#555" stroke-width="0.8"/>
<g fill="#4a68a4" stroke="#2a4278" stroke-width="0.6"><ellipse cx="12" cy="16.5" rx="2.6" ry="2"/><ellipse cx="36.5" cy="16.5" rx="2.6" ry="2"/><ellipse cx="7.2" cy="32.5" rx="2.8" ry="2.6"/><ellipse cx="42.8" cy="32.5" rx="2.8" ry="2.6"/></g>
<rect x="52" y="8" width="1" height="34" fill="#c4c4c2"/>
<rect x="61.5" y="7" width="39" height="34" rx="3" fill="url(#dbz)" stroke="#6a6a68"/>
<rect x="65.5" y="11" width="31" height="24.5" fill="url(#dsc)" stroke="#000" stroke-width="1.2"/>
<path d="M70 20L77 23L70 26" stroke="#fff" stroke-width="1.8" fill="none"/><path d="M77 31.5H86.5" stroke="#fff" stroke-width="1.6"/>
<circle cx="90" cy="38" r="0.9" fill="#6f6"/>
<path d="M117.5 13.5L120 10.5H139.5L142.5 13.5V41H117.5Z" fill="url(#dor)" stroke="#7a4a0a" stroke-width="0.9"/>
<rect x="120" y="17" width="20" height="10" rx="1" fill="none" stroke="#9a5a10" stroke-width="0.8"/>
<rect x="120" y="29" width="20" height="10" rx="1" fill="none" stroke="#9a5a10" stroke-width="0.8"/>
<rect x="127" y="23" width="6" height="3" fill="none" stroke="#7a4a0a" stroke-width="0.8"/><rect x="127" y="35" width="6" height="3" fill="none" stroke="#7a4a0a" stroke-width="0.8"/>
<circle cx="177.5" cy="24" r="17" fill="url(#dgl)" stroke="#2a3a8a" stroke-width="0.8"/>
<path d="M168 14C172 10 178 9 181 11L179 15L174 15L172 19L167 22L164 19C164 17 166 15 168 14Z" fill="#fff"/>
<path d="M165 28L170 27L173 31L171 37L168 38L166 33Z" fill="#fff"/>
<path d="M183 16L190 15L193 20L190 23L188 31L185 35L182 31L181 24L178 21Z" fill="#fff"/>
<rect x="209.5" y="6.5" width="31" height="36" rx="1.5" fill="#f6f6f6" stroke="#8a8a8a"/>
<g stroke="#bdbdbd" stroke-width="1"><path d="M215 12H235M215 15H235M215 18H235M215 21H235M215 24H224M215 27H222M215 30H222"/></g>
<path d="M232 36L242 45" stroke="#6a6a6a" stroke-width="3.2" stroke-linecap="round"/>
<circle cx="228.3" cy="29.3" r="8" fill="url(#dlens)" stroke="#4a7ac0" stroke-width="1.6"/><circle cx="228.3" cy="29.3" r="9.6" fill="none" stroke="#d8d8d8" stroke-width="1.6"/><circle cx="228.3" cy="29.3" r="10.5" fill="none" stroke="#999" stroke-width="0.6"/>
<rect x="252" y="8" width="1" height="34" fill="#c4c4c2"/>
<path d="M263 10H277L279 12.5H291.5V38H263Z" fill="url(#dfg)" stroke="#4a4a48" stroke-width="0.6"/>
<path d="M264 17.5H298.5L297 39.5H264.5Z" fill="url(#dfb)" stroke="#3a68b0" stroke-width="1"/></svg>
<div class="t" style="left:29.00px;top:7.15px;font-size:14px;line-height:14px;font-weight:normal;color:#1a1a1a;font-family:'Liberation Sans';transform:scaleX(1.0535);">Applications</div>
<div class="t" style="left:147.19px;top:7.15px;font-size:14px;line-height:14px;font-weight:normal;color:#1a1a1a;font-family:'Liberation Sans';transform:scaleX(1.0305);">spiral.ngc - AXIS 2.7....</div>
<div class="t" style="left:326.99px;top:7.15px;font-size:14px;line-height:14px;font-weight:normal;color:#1a1a1a;font-family:'Liberation Sans';transform:scaleX(1.0276);">corrugated.png (PNG ...</div>
<div class="t" style="left:506.38px;top:7.15px;font-size:14px;line-height:14px;font-weight:normal;color:#1a1a1a;font-family:'Liberation Sans';transform:scaleX(1.0202);">HAL Oscilloscope</div>
<div class="t" style="left:687.18px;top:7.15px;font-size:14px;line-height:14px;font-weight:normal;color:#1a1a1a;font-family:'Liberation Sans';transform:scaleX(1.0668);">Terminal - linuxcnc@l...</div>
<div class="t" style="left:867.18px;top:7.15px;font-size:14px;line-height:14px;font-weight:normal;color:#1a1a1a;font-family:'Liberation Sans';transform:scaleX(1.0598);">Terminal - linuxcnc@l...</div>
<div class="t" style="left:1221.03px;top:7.15px;font-size:14px;line-height:14px;font-weight:normal;color:#1a1a1a;font-family:'Liberation Sans';transform:scaleX(1.0733);">linuxcnc</div>
<div class="t" style="left:549.74px;top:38.15px;font-size:14px;line-height:14px;font-weight:bold;color:#111;font-family:'Liberation Sans';transform:scaleX(0.9517);">HAL Oscilloscope</div>
<div class="t" style="left:5.89px;top:66.15px;font-size:14px;line-height:14px;font-weight:normal;color:#1a1a1a;font-family:'Liberation Sans';transform:scaleX(1.0061);">File</div>
<div class="t" style="left:39.78px;top:66.15px;font-size:14px;line-height:14px;font-weight:normal;color:#1a1a1a;font-family:'Liberation Sans';transform:scaleX(1.1067);">Help</div>
<div class="t" style="left:4.83px;top:88.15px;font-size:14px;line-height:14px;font-weight:normal;color:#1a1a1a;font-family:'Liberation Sans';transform:scaleX(1.0653);">Horizontal</div>
<div class="t" style="left:5.08px;top:105.15px;font-size:14px;line-height:14px;font-weight:normal;color:#1a1a1a;font-family:'Liberation Sans';transform:scaleX(1.0572);">Zoom</div>
<div class="t" style="left:11.45px;top:123.75px;font-size:14px;line-height:14px;font-weight:normal;color:#1a1a1a;font-family:'Liberation Sans';transform:scaleX(0.9545);">Pos</div>
<div class="t" style="left:954.29px;top:106.85px;font-size:14px;line-height:14px;font-weight:normal;color:#1a1a1a;font-family:'Liberation Sans';transform:scaleX(1.0136);">2.00 Sec</div>
<div class="t" style="left:959.04px;top:121.85px;font-size:14px;line-height:14px;font-weight:normal;color:#1a1a1a;font-family:'Liberation Sans';transform:scaleX(1.0700);">per div</div>
<div class="t" style="left:1030.19px;top:106.85px;font-size:14px;line-height:14px;font-weight:normal;color:#1a1a1a;font-family:'Liberation Sans';transform:scaleX(1.0363);">4000 samples</div>
<div class="t" style="left:1029.99px;top:121.85px;font-size:14px;line-height:14px;font-weight:normal;color:#1a1a1a;font-family:'Liberation Sans';transform:scaleX(1.0285);">at 200 Hz</div>
<div class="t" style="left:1069.36px;top:146.15px;font-size:14px;line-height:14px;font-weight:normal;color:#1a1a1a;font-family:'Liberation Sans';transform:scaleX(0.9528);">IDLE</div>
<div class="t" style="left:4.70px;top:265.95px;font-size:14px;line-height:14px;font-weight:normal;color:#e0cdf0;font-family:'Liberation Sans';transform:scaleX(1.1093);">limit3.0.out</div>
<div class="t" style="left:5.17px;top:280.65px;font-size:14px;line-height:14px;font-weight:normal;color:#e0cdf0;font-family:'Liberation Sans';transform:scaleX(1.0567);">500m/div</div>
<div class="t" style="left:4.04px;top:363.15px;font-size:14px;line-height:14px;font-weight:normal;color:#c80000;font-family:'Liberation Sans';transform:scaleX(1.0636);">lowpass.0.out</div>
<div class="t" style="left:4.45px;top:377.95px;font-size:14px;line-height:14px;font-weight:normal;color:#c80000;font-family:'Liberation Sans';transform:scaleX(1.1043);">50 /div</div>
<div class="t" style="left:4.98px;top:537.55px;font-size:14px;line-height:14px;font-weight:normal;color:#00b4c4;font-family:'Liberation Sans';transform:scaleX(1.0353);">enable</div>
<div class="t" style="left:4.45px;top:552.15px;font-size:14px;line-height:14px;font-weight:normal;color:#00b4c4;font-family:'Liberation Sans';transform:scaleX(1.0474);">1 /div</div>
<div class="t" style="left:4.65px;top:747.85px;font-size:14px;line-height:14px;font-weight:normal;color:#5cc000;font-family:'Liberation Sans';transform:scaleX(1.0599);">pid.4.error</div>
<div class="t" style="left:4.54px;top:762.85px;font-size:14px;line-height:14px;font-weight:normal;color:#5cc000;font-family:'Liberation Sans';transform:scaleX(1.0560);">10 /div</div>
<div class="t" style="left:30.90px;top:917.15px;font-size:14px;line-height:14px;font-weight:normal;color:#111;font-family:'Liberation Sans';">1</div>
<div class="t" style="left:101.10px;top:917.15px;font-size:14px;line-height:14px;font-weight:normal;color:#111;font-family:'Liberation Sans';">2</div>
<div class="t" style="left:171.15px;top:917.15px;font-size:14px;line-height:14px;font-weight:normal;color:#111;font-family:'Liberation Sans';">3</div>
<div class="t" style="left:241.15px;top:917.15px;font-size:14px;line-height:14px;font-weight:normal;color:#111;font-family:'Liberation Sans';">4</div>
<div class="t" style="left:311.15px;top:917.15px;font-size:14px;line-height:14px;font-weight:normal;color:#111;font-family:'Liberation Sans';">5</div>
<div class="t" style="left:381.05px;top:917.15px;font-size:14px;line-height:14px;font-weight:normal;color:#111;font-family:'Liberation Sans';">6</div>
<div class="t" style="left:451.10px;top:917.15px;font-size:14px;line-height:14px;font-weight:normal;color:#111;font-family:'Liberation Sans';">7</div>
<div class="t" style="left:521.10px;top:917.15px;font-size:14px;line-height:14px;font-weight:normal;color:#111;font-family:'Liberation Sans';">8</div>
<div class="t" style="left:591.10px;top:917.15px;font-size:14px;line-height:14px;font-weight:normal;color:#111;font-family:'Liberation Sans';">9</div>
<div class="t" style="left:656.96px;top:917.15px;font-size:14px;line-height:14px;font-weight:normal;color:#111;font-family:'Liberation Sans';">10</div>
<div class="t" style="left:727.53px;top:917.15px;font-size:14px;line-height:14px;font-weight:normal;color:#111;font-family:'Liberation Sans';">11</div>
<div class="t" style="left:797.06px;top:917.15px;font-size:14px;line-height:14px;font-weight:normal;color:#111;font-family:'Liberation Sans';">12</div>
<div class="t" style="left:867.01px;top:917.15px;font-size:14px;line-height:14px;font-weight:normal;color:#111;font-family:'Liberation Sans';">13</div>
<div class="t" style="left:936.91px;top:917.15px;font-size:14px;line-height:14px;font-weight:normal;color:#111;font-family:'Liberation Sans';">14</div>
<div class="t" style="left:1007.01px;top:917.15px;font-size:14px;line-height:14px;font-weight:normal;color:#111;font-family:'Liberation Sans';">15</div>
<div class="t" style="left:1082.51px;top:917.15px;font-size:14px;line-height:14px;font-weight:normal;color:#111;font-family:'Liberation Sans';">16</div>
<div class="t" style="left:4.99px;top:935.15px;font-size:14px;line-height:14px;font-weight:normal;color:#1a1a1a;font-family:'Liberation Sans';transform:scaleX(1.0182);">Selected Channel</div>
<div class="t" style="left:13.35px;top:954.15px;font-size:14px;line-height:14px;font-weight:normal;color:#1a1a1a;font-family:'Liberation Sans';">4</div>
<div class="t" style="left:191.99px;top:953.90px;font-size:14px;line-height:14px;font-weight:normal;color:#1a1a1a;font-family:'Liberation Sans';transform:scaleX(1.1168);">limit3.0.out</div>
<div class="t" style="left:426.18px;top:952.04px;font-size:13px;line-height:13px;font-weight:normal;color:#1a1a1a;font-family:'Liberation Mono';transform:scaleX(1.0288);">f( 14.33000) = -0.39600 (ddt&nbsp; 0.65400)</div>
<div class="t" style="left:1136.52px;top:86.75px;font-size:14px;line-height:14px;font-weight:normal;color:#1a1a1a;font-family:'Liberation Sans';transform:scaleX(0.9776);">Run Mode</div>
<div class="t" style="left:1152.33px;top:102.65px;font-size:14px;line-height:14px;font-weight:normal;color:#1a1a1a;font-family:'Liberation Sans';transform:scaleX(1.0671);">Normal</div>
<div class="t" style="left:1152.86px;top:120.65px;font-size:14px;line-height:14px;font-weight:normal;color:#1a1a1a;font-family:'Liberation Sans';transform:scaleX(1.0601);">Single</div>
<div class="t" style="left:1152.21px;top:138.65px;font-size:14px;line-height:14px;font-weight:normal;color:#1a1a1a;font-family:'Liberation Sans';transform:scaleX(1.1761);">Roll</div>
<div class="t" style="left:1152.85px;top:156.65px;font-size:14px;line-height:14px;font-weight:normal;color:#1a1a1a;font-family:'Liberation Sans';transform:scaleX(1.0864);">Stop</div>
<div class="t" style="left:1211.71px;top:86.75px;font-size:14px;line-height:14px;font-weight:normal;color:#1a1a1a;font-family:'Liberation Sans';transform:scaleX(0.9801);">Trigger</div>
<div class="t" style="left:1226.13px;top:102.65px;font-size:14px;line-height:14px;font-weight:normal;color:#1a1a1a;font-family:'Liberation Sans';transform:scaleX(1.0671);">Normal</div>
<div class="t" style="left:1227.30px;top:120.65px;font-size:14px;line-height:14px;font-weight:normal;color:#1a1a1a;font-family:'Liberation Sans';transform:scaleX(1.0279);">Auto</div>
<div class="t" style="left:1223.90px;top:141.85px;font-size:14px;line-height:14px;font-weight:normal;color:#1a1a1a;font-family:'Liberation Sans';">Force</div>
<div class="t" style="left:1207.75px;top:161.15px;font-size:14px;line-height:14px;font-weight:normal;color:#1a1a1a;font-family:'Liberation Sans';transform:scaleX(1.0490);">Level</div>
<div class="t" style="left:1248.93px;top:161.15px;font-size:14px;line-height:14px;font-weight:normal;color:#1a1a1a;font-family:'Liberation Sans';transform:scaleX(0.9767);">Pos</div>
<div class="t" style="left:1137.20px;top:176.15px;font-size:14px;line-height:14px;font-weight:normal;color:#1a1a1a;font-family:'Liberation Sans';transform:scaleX(1.0556);">Vertical</div>
<div class="t" style="left:1135.95px;top:191.15px;font-size:14px;line-height:14px;font-weight:normal;color:#1a1a1a;font-family:'Liberation Sans';transform:scaleX(1.0720);">Gain</div>
<div class="t" style="left:1173.93px;top:191.15px;font-size:14px;line-height:14px;font-weight:normal;color:#1a1a1a;font-family:'Liberation Sans';transform:scaleX(0.9767);">Pos</div>
<div class="t" style="left:1151.00px;top:882.05px;font-size:14px;line-height:14px;font-weight:normal;color:#1a1a1a;font-family:'Liberation Sans';transform:scaleX(1.0049);">Scale</div>
<div class="t" style="left:1137.47px;top:897.15px;font-size:14px;line-height:14px;font-weight:normal;color:#1a1a1a;font-family:'Liberation Sans';transform:scaleX(1.0656);">500m/div</div>
<div class="t" style="left:1148.37px;top:915.95px;font-size:14px;line-height:14px;font-weight:normal;color:#1a1a1a;font-family:'Liberation Sans';transform:scaleX(1.0439);">Offset</div>
<div class="t" style="left:1148.99px;top:931.15px;font-size:14px;line-height:14px;font-weight:normal;color:#1a1a1a;font-family:'Liberation Sans';transform:scaleX(1.0280);">0.000</div>
<div class="t" style="left:1139.80px;top:954.15px;font-size:14px;line-height:14px;font-weight:normal;color:#1a1a1a;font-family:'Liberation Sans';transform:scaleX(0.9967);">Chan Off</div>
<div class="t" style="left:1224.85px;top:882.05px;font-size:14px;line-height:14px;font-weight:normal;color:#1a1a1a;font-family:'Liberation Sans';transform:scaleX(1.0490);">Level</div>
<div class="t" style="left:1231.85px;top:897.15px;font-size:14px;line-height:14px;font-weight:normal;color:#1a1a1a;font-family:'Liberation Sans';transform:scaleX(1.0866);">----</div>
<div class="t" style="left:1222.34px;top:915.95px;font-size:14px;line-height:14px;font-weight:normal;color:#1a1a1a;font-family:'Liberation Sans';transform:scaleX(1.0564);">Rising</div>
<div class="t" style="left:1217.90px;top:938.95px;font-size:14px;line-height:14px;font-weight:normal;color:#1a1a1a;font-family:'Liberation Sans';transform:scaleX(0.9960);">Source</div>
<div class="t" style="left:1217.29px;top:954.15px;font-size:14px;line-height:14px;font-weight:normal;color:#1a1a1a;font-family:'Liberation Sans';transform:scaleX(1.0074);">Chan&nbsp; 2</div>
</body></html>
